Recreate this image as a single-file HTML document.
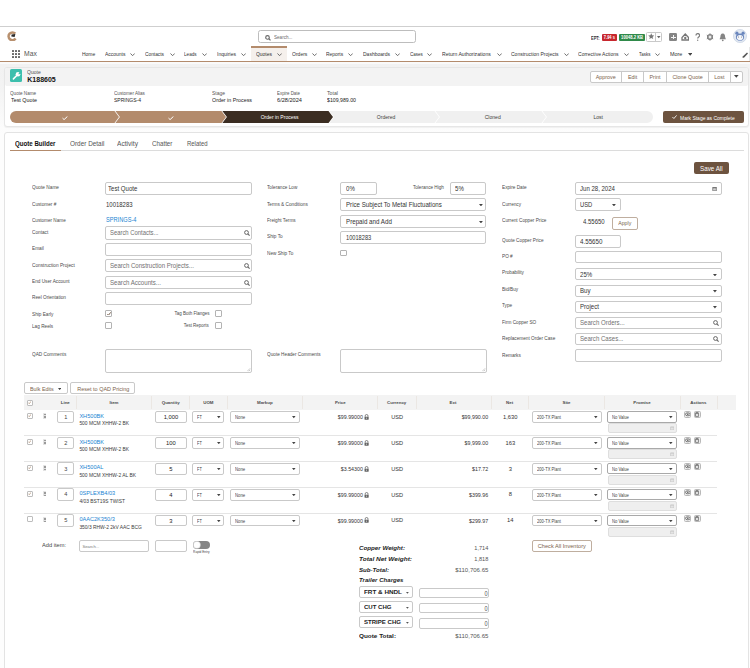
<!DOCTYPE html>
<html><head><meta charset="utf-8"><style>
html,body{margin:0;padding:0;}
body{width:750px;height:668px;position:relative;overflow:hidden;background:#fff;font-family:"Liberation Sans",sans-serif;}
div{box-sizing:border-box;}
</style></head><body>
<div style="position:absolute;left:0.00px;top:0.00px;width:750.00px;height:26.00px;background:#ffffff;border-radius:0px;box-sizing:border-box;"></div>
<div style="position:absolute;left:0.00px;top:26.00px;width:750.00px;height:1.00px;background:#cfcfcf;border-radius:0px;box-sizing:border-box;"></div>
<div style="position:absolute;left:0.00px;top:27.00px;width:750.00px;height:34.00px;background:#ffffff;border-radius:0px;box-sizing:border-box;"></div>
<svg style="position:absolute;left:6.00px;top:31.00px" width="11" height="10" viewBox="0 0 11 10"><path d="M9.3 2.6 A3.9 3.9 0 1 0 9.6 7.6" fill="none" stroke="#b8906e" stroke-width="2.5"/><path d="M5.6 3.4 L9.4 3.0 L8.6 5.9 L5.3 5.6 Z" fill="#2a2a2a"/></svg>
<div style="position:absolute;left:258.30px;top:29.90px;width:157.50px;height:13.30px;background:#fff;border:1px solid #bdbdbd;border-radius:2.5px;box-sizing:border-box;"></div>
<svg style="position:absolute;left:265.00px;top:34.60px" width="6" height="6" viewBox="0 0 6 6"><circle cx="2.5" cy="2.4" r="1.8" fill="none" stroke="#666" stroke-width="1.1"/><line x1="3.8" y1="3.7" x2="5.5" y2="5.4" stroke="#666" stroke-width="1.2"/></svg>
<div style="position:absolute;left:273.60px;top:34.86px;font-size:5.60px;line-height:1;font-weight:400;font-style:normal;color:#6b6b6b;white-space:pre;transform:scaleX(0.8210);transform-origin:left 50%;">Search...</div>
<div style="position:absolute;left:591.00px;top:35.54px;font-size:5.28px;line-height:1;font-weight:700;font-style:normal;color:#333;white-space:pre;transform:scaleX(0.7516);transform-origin:left 50%;">EPT:</div>
<div style="position:absolute;left:602.00px;top:34.00px;width:15.00px;height:7.00px;background:#c7272e;border-radius:1px;box-sizing:border-box;"></div>
<div style="position:absolute;left:602.15px;top:35.44px;font-size:5.29px;line-height:1;font-weight:700;font-style:normal;color:#fff;white-space:pre;transform:scaleX(0.7479);transform-origin:center 50%;">7.94 s</div>
<div style="position:absolute;left:619.00px;top:34.00px;width:26.00px;height:7.00px;background:#2f8a4a;border-radius:1px;box-sizing:border-box;"></div>
<div style="position:absolute;left:617.88px;top:35.44px;font-size:5.29px;line-height:1;font-weight:700;font-style:normal;color:#fff;white-space:pre;transform:scaleX(0.7792);transform-origin:center 50%;">10048.2 KB</div>
<div style="position:absolute;left:646.40px;top:32.00px;width:16.10px;height:9.80px;background:#fff;border:1px solid #c9c9c9;border-radius:1.5px;box-sizing:border-box;"></div>
<div style="position:absolute;left:655.20px;top:32.00px;width:0.70px;height:9.80px;background:#c9c9c9;border-radius:0px;box-sizing:border-box;"></div>
<svg style="position:absolute;left:647.80px;top:33.20px" width="6.5" height="6.5" viewBox="0 0 6.5 6.5"><path d="M3.25 0.3 L4.1 2.3 L6.3 2.5 L4.6 3.9 L5.2 6.1 L3.25 4.9 L1.3 6.1 L1.9 3.9 L0.2 2.5 L2.4 2.3Z" fill="#777"/></svg>
<svg style="position:absolute;left:657.30px;top:36.00px" width="3.5" height="2.5" viewBox="0 0 3.5 2.5"><path d="M0 0 L3.5 0 L1.75 2.2Z" fill="#666"/></svg>
<div style="position:absolute;left:669.00px;top:33.30px;width:8.00px;height:7.30px;background:#858585;border-radius:1.2px;box-sizing:border-box;"></div>
<div style="position:absolute;left:672.60px;top:34.70px;width:0.80px;height:4.50px;background:#f4f4f4;border-radius:0px;box-sizing:border-box;"></div>
<div style="position:absolute;left:670.50px;top:36.60px;width:5.00px;height:0.80px;background:#f4f4f4;border-radius:0px;box-sizing:border-box;"></div>
<svg style="position:absolute;left:680.80px;top:33.00px" width="8.5" height="8" viewBox="0 0 8.5 8"><path d="M1 7 L1 4.5 L4.25 1 L7.5 4.5 L7.5 7 Z" fill="none" stroke="#777" stroke-width="1.3"/><circle cx="4.25" cy="5" r="1.2" fill="#777"/></svg>
<svg style="position:absolute;left:694.80px;top:33.20px" width="5.4" height="8" viewBox="0 0 5.4 8"><path d="M1 2.4 A1.8 1.8 0 1 1 3.7 3.9 C2.9 4.5 2.7 4.9 2.7 5.6" fill="none" stroke="#808080" stroke-width="1.25"/><circle cx="2.7" cy="7.3" r="0.7" fill="#808080"/></svg>
<svg style="position:absolute;left:705.80px;top:33.20px" width="8" height="8" viewBox="0 0 8 8"><circle cx="4" cy="4" r="2.4" fill="none" stroke="#858585" stroke-width="1.3"/><g stroke="#858585" stroke-width="1.0"><line x1="4" y1="0.3" x2="4" y2="7.7"/><line x1="0.8" y1="2.1" x2="7.2" y2="5.9"/><line x1="0.8" y1="5.9" x2="7.2" y2="2.1"/></g><circle cx="4" cy="4" r="1.1" fill="#fff"/></svg>
<svg style="position:absolute;left:718.80px;top:33.00px" width="7.5" height="8.5" viewBox="0 0 7.5 8.5"><path d="M3.75 0.6 C1.8 0.6 1.4 2.5 1.4 4 L0.6 6.2 L6.9 6.2 L6.1 4 C6.1 2.5 5.7 0.6 3.75 0.6Z" fill="#858585"/><circle cx="3.75" cy="7.3" r="0.9" fill="#858585"/></svg>
<svg style="position:absolute;left:733.00px;top:29.30px" width="14" height="14" viewBox="0 0 14 14"><circle cx="7" cy="7" r="6.6" fill="#e3e9f2" stroke="#c3cfe0" stroke-width="0.6"/><circle cx="3.9" cy="4.2" r="1.6" fill="#6a86bd"/><circle cx="10.1" cy="4.2" r="1.6" fill="#6a86bd"/><ellipse cx="7" cy="8.1" rx="4.1" ry="3.6" fill="#6a86bd"/><ellipse cx="7" cy="8.6" rx="3.1" ry="2.6" fill="#f4f6fa"/><circle cx="5.6" cy="8" r="0.45" fill="#334"/><circle cx="8.4" cy="8" r="0.45" fill="#334"/></svg>
<div style="position:absolute;left:11.90px;top:49.80px;width:1.90px;height:1.90px;background:#6a6a6a;border-radius:0.2px;box-sizing:border-box;"></div>
<div style="position:absolute;left:11.90px;top:52.85px;width:1.90px;height:1.90px;background:#6a6a6a;border-radius:0.2px;box-sizing:border-box;"></div>
<div style="position:absolute;left:11.90px;top:55.90px;width:1.90px;height:1.90px;background:#6a6a6a;border-radius:0.2px;box-sizing:border-box;"></div>
<div style="position:absolute;left:14.95px;top:49.80px;width:1.90px;height:1.90px;background:#6a6a6a;border-radius:0.2px;box-sizing:border-box;"></div>
<div style="position:absolute;left:14.95px;top:52.85px;width:1.90px;height:1.90px;background:#6a6a6a;border-radius:0.2px;box-sizing:border-box;"></div>
<div style="position:absolute;left:14.95px;top:55.90px;width:1.90px;height:1.90px;background:#6a6a6a;border-radius:0.2px;box-sizing:border-box;"></div>
<div style="position:absolute;left:18.00px;top:49.80px;width:1.90px;height:1.90px;background:#6a6a6a;border-radius:0.2px;box-sizing:border-box;"></div>
<div style="position:absolute;left:18.00px;top:52.85px;width:1.90px;height:1.90px;background:#6a6a6a;border-radius:0.2px;box-sizing:border-box;"></div>
<div style="position:absolute;left:18.00px;top:55.90px;width:1.90px;height:1.90px;background:#6a6a6a;border-radius:0.2px;box-sizing:border-box;"></div>
<div style="position:absolute;left:24.00px;top:49.82px;font-size:8.00px;line-height:1;font-weight:400;font-style:normal;color:#555;white-space:pre;transform:scaleX(0.8469);transform-origin:left 50%;">Max</div>
<div style="position:absolute;left:251.00px;top:46.60px;width:36.00px;height:14.40px;background:#f5f0ec;border-radius:0px;box-sizing:border-box;"></div>
<div style="position:absolute;left:250.80px;top:46.40px;width:36.30px;height:1.60px;background:#b38b6c;border-radius:0px;box-sizing:border-box;"></div>
<div style="position:absolute;left:82.00px;top:51.83px;font-size:5.30px;line-height:1;font-weight:400;font-style:normal;color:#333;white-space:pre;transform:scaleX(0.9407);transform-origin:left 50%;">Home</div>
<div style="position:absolute;left:105.00px;top:51.83px;font-size:5.30px;line-height:1;font-weight:400;font-style:normal;color:#333;white-space:pre;transform:scaleX(0.9358);transform-origin:left 50%;">Accounts</div>
<svg style="position:absolute;left:130.30px;top:52.50px" width="5.2" height="3.4" viewBox="0 0 5.2 3.4"><path d="M0.5 0.5 L2.6 2.7 L4.7 0.5" fill="none" stroke="#666" stroke-width="0.95"/></svg>
<div style="position:absolute;left:145.00px;top:51.83px;font-size:5.30px;line-height:1;font-weight:400;font-style:normal;color:#333;white-space:pre;transform:scaleX(0.9084);transform-origin:left 50%;">Contacts</div>
<svg style="position:absolute;left:170.00px;top:52.50px" width="5.2" height="3.4" viewBox="0 0 5.2 3.4"><path d="M0.5 0.5 L2.6 2.7 L4.7 0.5" fill="none" stroke="#666" stroke-width="0.95"/></svg>
<div style="position:absolute;left:184.40px;top:51.83px;font-size:5.30px;line-height:1;font-weight:400;font-style:normal;color:#333;white-space:pre;transform:scaleX(0.8725);transform-origin:left 50%;">Leads</div>
<svg style="position:absolute;left:202.00px;top:52.50px" width="5.2" height="3.4" viewBox="0 0 5.2 3.4"><path d="M0.5 0.5 L2.6 2.7 L4.7 0.5" fill="none" stroke="#666" stroke-width="0.95"/></svg>
<div style="position:absolute;left:217.00px;top:51.83px;font-size:5.30px;line-height:1;font-weight:400;font-style:normal;color:#333;white-space:pre;transform:scaleX(0.9484);transform-origin:left 50%;">Inquiries</div>
<svg style="position:absolute;left:241.00px;top:52.50px" width="5.2" height="3.4" viewBox="0 0 5.2 3.4"><path d="M0.5 0.5 L2.6 2.7 L4.7 0.5" fill="none" stroke="#666" stroke-width="0.95"/></svg>
<div style="position:absolute;left:255.60px;top:51.83px;font-size:5.30px;line-height:1;font-weight:400;font-style:normal;color:#333;white-space:pre;transform:scaleX(0.9363);transform-origin:left 50%;">Quotes</div>
<svg style="position:absolute;left:277.00px;top:52.50px" width="5.2" height="3.4" viewBox="0 0 5.2 3.4"><path d="M0.5 0.5 L2.6 2.7 L4.7 0.5" fill="none" stroke="#666" stroke-width="0.95"/></svg>
<div style="position:absolute;left:291.60px;top:51.83px;font-size:5.30px;line-height:1;font-weight:400;font-style:normal;color:#333;white-space:pre;transform:scaleX(0.9507);transform-origin:left 50%;">Orders</div>
<svg style="position:absolute;left:312.00px;top:52.50px" width="5.2" height="3.4" viewBox="0 0 5.2 3.4"><path d="M0.5 0.5 L2.6 2.7 L4.7 0.5" fill="none" stroke="#666" stroke-width="0.95"/></svg>
<div style="position:absolute;left:326.40px;top:51.83px;font-size:5.30px;line-height:1;font-weight:400;font-style:normal;color:#333;white-space:pre;transform:scaleX(0.9268);transform-origin:left 50%;">Reports</div>
<svg style="position:absolute;left:348.00px;top:52.50px" width="5.2" height="3.4" viewBox="0 0 5.2 3.4"><path d="M0.5 0.5 L2.6 2.7 L4.7 0.5" fill="none" stroke="#666" stroke-width="0.95"/></svg>
<div style="position:absolute;left:363.00px;top:51.83px;font-size:5.30px;line-height:1;font-weight:400;font-style:normal;color:#333;white-space:pre;transform:scaleX(0.9448);transform-origin:left 50%;">Dashboards</div>
<svg style="position:absolute;left:395.00px;top:52.50px" width="5.2" height="3.4" viewBox="0 0 5.2 3.4"><path d="M0.5 0.5 L2.6 2.7 L4.7 0.5" fill="none" stroke="#666" stroke-width="0.95"/></svg>
<div style="position:absolute;left:409.60px;top:51.83px;font-size:5.30px;line-height:1;font-weight:400;font-style:normal;color:#333;white-space:pre;transform:scaleX(0.8520);transform-origin:left 50%;">Cases</div>
<svg style="position:absolute;left:427.00px;top:52.50px" width="5.2" height="3.4" viewBox="0 0 5.2 3.4"><path d="M0.5 0.5 L2.6 2.7 L4.7 0.5" fill="none" stroke="#666" stroke-width="0.95"/></svg>
<div style="position:absolute;left:442.00px;top:51.83px;font-size:5.30px;line-height:1;font-weight:400;font-style:normal;color:#333;white-space:pre;transform:scaleX(0.9630);transform-origin:left 50%;">Return Authorizations</div>
<svg style="position:absolute;left:496.50px;top:52.50px" width="5.2" height="3.4" viewBox="0 0 5.2 3.4"><path d="M0.5 0.5 L2.6 2.7 L4.7 0.5" fill="none" stroke="#666" stroke-width="0.95"/></svg>
<div style="position:absolute;left:510.80px;top:51.83px;font-size:5.30px;line-height:1;font-weight:400;font-style:normal;color:#333;white-space:pre;transform:scaleX(0.9450);transform-origin:left 50%;">Construction Projects</div>
<svg style="position:absolute;left:563.70px;top:52.50px" width="5.2" height="3.4" viewBox="0 0 5.2 3.4"><path d="M0.5 0.5 L2.6 2.7 L4.7 0.5" fill="none" stroke="#666" stroke-width="0.95"/></svg>
<div style="position:absolute;left:578.40px;top:51.83px;font-size:5.30px;line-height:1;font-weight:400;font-style:normal;color:#333;white-space:pre;transform:scaleX(0.9506);transform-origin:left 50%;">Corrective Actions</div>
<svg style="position:absolute;left:624.00px;top:52.50px" width="5.2" height="3.4" viewBox="0 0 5.2 3.4"><path d="M0.5 0.5 L2.6 2.7 L4.7 0.5" fill="none" stroke="#666" stroke-width="0.95"/></svg>
<div style="position:absolute;left:639.00px;top:51.83px;font-size:5.30px;line-height:1;font-weight:400;font-style:normal;color:#333;white-space:pre;transform:scaleX(0.8414);transform-origin:left 50%;">Tasks</div>
<svg style="position:absolute;left:655.00px;top:52.50px" width="5.2" height="3.4" viewBox="0 0 5.2 3.4"><path d="M0.5 0.5 L2.6 2.7 L4.7 0.5" fill="none" stroke="#666" stroke-width="0.95"/></svg>
<div style="position:absolute;left:669.60px;top:51.83px;font-size:5.30px;line-height:1;font-weight:400;font-style:normal;color:#333;white-space:pre;transform:scaleX(1.0269);transform-origin:left 50%;">More</div>
<svg style="position:absolute;left:687.60px;top:52.60px" width="4.4" height="3" viewBox="0 0 4.4 3"><path d="M0 0 L4.4 0 L2.2 2.8Z" fill="#444"/></svg>
<svg style="position:absolute;left:741.80px;top:51.50px" width="6.5" height="6.5" viewBox="0 0 6.5 6.5"><path d="M0.5 6 L1 4.2 L5 0.4 L6.1 1.5 L2.2 5.4 Z" fill="#555"/></svg>
<div style="position:absolute;left:748.50px;top:47.00px;width:1.50px;height:14.00px;background:#e8e8e8;border-radius:0px;box-sizing:border-box;"></div>
<div style="position:absolute;left:0.00px;top:61.00px;width:750.00px;height:1.20px;background:#b38b6c;border-radius:0px;box-sizing:border-box;"></div>
<div style="position:absolute;left:0.00px;top:62.20px;width:750.00px;height:605.80px;background:#fdfdfd;border-radius:0px;box-sizing:border-box;"></div>
<div style="position:absolute;left:0.00px;top:63.60px;width:750.00px;height:71.40px;background:linear-gradient(#f2f2f2 0%, #f3f3f3 30%, #fcfcfc 90%, #fdfdfd 100%);border-radius:0px;box-sizing:border-box;"></div>
<div style="position:absolute;left:0.00px;top:62.20px;width:750.00px;height:1.40px;background:#fafafa;border-radius:0px;box-sizing:border-box;"></div>
<div style="position:absolute;left:4.20px;top:66.80px;width:744.60px;height:60.40px;background:#ffffff;border:1px solid #e6e6e6;border-radius:3px;box-sizing:border-box;box-shadow:0 1px 1px rgba(0,0,0,0.05);"></div>
<div style="position:absolute;left:5.20px;top:67.80px;width:742.60px;height:18.00px;background:#f3f3f3;border-radius:2px;box-sizing:border-box;"></div>
<div style="position:absolute;left:10.00px;top:69.00px;width:12.30px;height:12.70px;background:#3dbfad;border-radius:1.5px;box-sizing:border-box;"></div>
<svg style="position:absolute;left:11.50px;top:70.50px" width="9.5" height="9.5" viewBox="0 0 9.5 9.5"><circle cx="6.0" cy="3.2" r="2.3" fill="#fff"/><line x1="5.0" y1="4.3" x2="1.4" y2="7.9" stroke="#fff" stroke-width="1.5" stroke-linecap="round"/><path d="M6.3 2.9 L8.0 0.6 L9.3 1.9 L7.0 3.6 Z" fill="#3dbfad"/></svg>
<div style="position:absolute;left:27.30px;top:70.10px;font-size:5.90px;line-height:1;font-weight:400;font-style:normal;color:#555;white-space:pre;transform:scaleX(0.8586);transform-origin:left 50%;">Quote</div>
<div style="position:absolute;left:27.30px;top:75.68px;font-size:7.00px;line-height:1;font-weight:700;font-style:normal;color:#111;white-space:pre;">K188605</div>
<div style="position:absolute;left:589.70px;top:70.50px;width:152.90px;height:12.20px;background:#ffffff;border:1px solid #c9c9c9;border-radius:2px;box-sizing:border-box;"></div>
<div style="position:absolute;left:595.64px;top:74.58px;font-size:5.40px;line-height:1;font-weight:400;font-style:normal;color:#7a5f4c;white-space:pre;">Approve</div>
<div style="position:absolute;left:621.40px;top:70.50px;width:0.80px;height:12.20px;background:#c9c9c9;border-radius:0px;box-sizing:border-box;"></div>
<div style="position:absolute;left:627.90px;top:74.58px;font-size:5.40px;line-height:1;font-weight:400;font-style:normal;color:#7a5f4c;white-space:pre;">Edit</div>
<div style="position:absolute;left:643.10px;top:70.50px;width:0.80px;height:12.20px;background:#c9c9c9;border-radius:0px;box-sizing:border-box;"></div>
<div style="position:absolute;left:649.50px;top:74.58px;font-size:5.40px;line-height:1;font-weight:400;font-style:normal;color:#7a5f4c;white-space:pre;">Print</div>
<div style="position:absolute;left:666.40px;top:70.50px;width:0.80px;height:12.20px;background:#c9c9c9;border-radius:0px;box-sizing:border-box;"></div>
<div style="position:absolute;left:672.44px;top:74.58px;font-size:5.40px;line-height:1;font-weight:400;font-style:normal;color:#7a5f4c;white-space:pre;">Clone Quote</div>
<div style="position:absolute;left:708.20px;top:70.50px;width:0.80px;height:12.20px;background:#c9c9c9;border-radius:0px;box-sizing:border-box;"></div>
<div style="position:absolute;left:714.25px;top:74.58px;font-size:5.40px;line-height:1;font-weight:400;font-style:normal;color:#7a5f4c;white-space:pre;">Lost</div>
<div style="position:absolute;left:729.90px;top:70.50px;width:0.80px;height:12.20px;background:#c9c9c9;border-radius:0px;box-sizing:border-box;"></div>
<svg style="position:absolute;left:734.20px;top:75.40px" width="4.6" height="3" viewBox="0 0 4.6 3"><path d="M0 0 L4.6 0 L2.3 2.8Z" fill="#444"/></svg>
<div style="position:absolute;left:10.00px;top:90.69px;font-size:5.20px;line-height:1;font-weight:400;font-style:normal;color:#555;white-space:pre;transform:scaleX(0.8887);transform-origin:left 50%;">Quote Name</div>
<div style="position:absolute;left:10.70px;top:96.64px;font-size:6.00px;line-height:1;font-weight:400;font-style:normal;color:#222;white-space:pre;transform:scaleX(0.8961);transform-origin:left 50%;">Test Quote</div>
<div style="position:absolute;left:114.00px;top:90.69px;font-size:5.20px;line-height:1;font-weight:400;font-style:normal;color:#555;white-space:pre;transform:scaleX(0.8865);transform-origin:left 50%;">Customer Alias</div>
<div style="position:absolute;left:114.00px;top:96.64px;font-size:6.00px;line-height:1;font-weight:400;font-style:normal;color:#222;white-space:pre;transform:scaleX(0.8349);transform-origin:left 50%;">SPRINGS-4</div>
<div style="position:absolute;left:211.80px;top:90.69px;font-size:5.20px;line-height:1;font-weight:400;font-style:normal;color:#555;white-space:pre;transform:scaleX(0.9567);transform-origin:left 50%;">Stage</div>
<div style="position:absolute;left:211.80px;top:96.64px;font-size:6.00px;line-height:1;font-weight:400;font-style:normal;color:#222;white-space:pre;transform:scaleX(0.8886);transform-origin:left 50%;">Order in Process</div>
<div style="position:absolute;left:277.00px;top:90.69px;font-size:5.20px;line-height:1;font-weight:400;font-style:normal;color:#555;white-space:pre;transform:scaleX(0.8466);transform-origin:left 50%;">Expire Date</div>
<div style="position:absolute;left:277.00px;top:96.64px;font-size:6.00px;line-height:1;font-weight:400;font-style:normal;color:#222;white-space:pre;transform:scaleX(0.9366);transform-origin:left 50%;">6/28/2024</div>
<div style="position:absolute;left:327.00px;top:90.69px;font-size:5.20px;line-height:1;font-weight:400;font-style:normal;color:#555;white-space:pre;">Total</div>
<div style="position:absolute;left:327.00px;top:96.64px;font-size:6.00px;line-height:1;font-weight:400;font-style:normal;color:#222;white-space:pre;transform:scaleX(0.8691);transform-origin:left 50%;">$109,989.00</div>
<svg style="position:absolute;left:10.00px;top:111.00px" width="643" height="12" viewBox="0 0 643 12"><path d="M6 0 L104.5 0 L109 6.0 L104.5 12 L6 12 A6 6 0 0 1 6 0 Z" fill="#b38b6c"/><path d="M105.4 0 L211.5 0 L216 6.0 L211.5 12 L105.4 12 L109.9 6.0 Z" fill="#b38b6c"/><path d="M212.4 0 L318.5 0 L323 6.0 L318.5 12 L212.4 12 L216.9 6.0 Z" fill="#3b2d22"/><path d="M319.4 0 L424.5 0 L429 6.0 L424.5 12 L319.4 12 L323.9 6.0 Z" fill="#f0f0f0"/><path d="M425.4 0 L531.5 0 L536 6.0 L531.5 12 L425.4 12 L429.9 6.0 Z" fill="#f0f0f0"/><path d="M532.4 0 L637 0 A6 6 0 0 1 637 12 L532.4 12 L536.9 6.0 Z" fill="#f0f0f0"/></svg>
<svg style="position:absolute;left:61.60px;top:115.80px" width="6" height="4.2" viewBox="0 0 6 4.2"><path d="M0.5 2.1 L2.1 3.6 L5.4 0.5" fill="none" stroke="#fff" stroke-width="1.0"/></svg>
<svg style="position:absolute;left:168.30px;top:115.80px" width="6" height="4.2" viewBox="0 0 6 4.2"><path d="M0.5 2.1 L2.1 3.6 L5.4 0.5" fill="none" stroke="#fff" stroke-width="1.0"/></svg>
<div style="position:absolute;left:258.87px;top:115.12px;font-size:5.50px;line-height:1;font-weight:400;font-style:normal;color:#fff;white-space:pre;transform:scaleX(0.9209);transform-origin:center 50%;">Order in Process</div>
<div style="position:absolute;left:375.91px;top:115.12px;font-size:5.50px;line-height:1;font-weight:400;font-style:normal;color:#3e3e3c;white-space:pre;transform:scaleX(0.9169);transform-origin:center 50%;">Ordered</div>
<div style="position:absolute;left:483.79px;top:115.12px;font-size:5.50px;line-height:1;font-weight:400;font-style:normal;color:#3e3e3c;white-space:pre;transform:scaleX(0.9180);transform-origin:center 50%;">Cloned</div>
<div style="position:absolute;left:593.40px;top:115.12px;font-size:5.50px;line-height:1;font-weight:400;font-style:normal;color:#3e3e3c;white-space:pre;transform:scaleX(0.9138);transform-origin:center 50%;">Lost</div>
<div style="position:absolute;left:663.00px;top:111.00px;width:81.00px;height:12.20px;background:#6d533f;border-radius:2px;box-sizing:border-box;"></div>
<svg style="position:absolute;left:671.60px;top:114.90px" width="5" height="4" viewBox="0 0 5 4"><path d="M0.4 2.0 L1.9 3.5 L4.6 0.4" fill="none" stroke="#fff" stroke-width="0.85"/></svg>
<div style="position:absolute;left:680.20px;top:114.89px;font-size:6.09px;line-height:1;font-weight:400;font-style:normal;color:#fff;white-space:pre;transform:scaleX(0.8177);transform-origin:left 50%;">Mark Stage as Complete</div>
<div style="position:absolute;left:4.20px;top:131.60px;width:744.60px;height:548.40px;background:#ffffff;border:1px solid #e3e3e3;border-radius:3px;box-sizing:border-box;"></div>
<div style="position:absolute;left:14.80px;top:140.59px;font-size:6.80px;line-height:1;font-weight:700;font-style:normal;color:#111;white-space:pre;transform:scaleX(0.9008);transform-origin:left 50%;">Quote Builder</div>
<div style="position:absolute;left:69.50px;top:140.59px;font-size:6.80px;line-height:1;font-weight:400;font-style:normal;color:#555;white-space:pre;transform:scaleX(0.9412);transform-origin:left 50%;">Order Detail</div>
<div style="position:absolute;left:117.00px;top:140.59px;font-size:6.80px;line-height:1;font-weight:400;font-style:normal;color:#555;white-space:pre;transform:scaleX(0.9751);transform-origin:left 50%;">Activity</div>
<div style="position:absolute;left:152.00px;top:140.59px;font-size:6.80px;line-height:1;font-weight:400;font-style:normal;color:#555;white-space:pre;transform:scaleX(0.9148);transform-origin:left 50%;">Chatter</div>
<div style="position:absolute;left:186.80px;top:140.59px;font-size:6.80px;line-height:1;font-weight:400;font-style:normal;color:#555;white-space:pre;transform:scaleX(0.8746);transform-origin:left 50%;">Related</div>
<div style="position:absolute;left:9.70px;top:150.20px;width:734.30px;height:1.00px;background:#dcdcdc;border-radius:0px;box-sizing:border-box;"></div>
<div style="position:absolute;left:9.70px;top:149.90px;width:51.00px;height:1.30px;background:#b38b6c;border-radius:0px;box-sizing:border-box;"></div>
<div style="position:absolute;left:694.00px;top:162.00px;width:35.00px;height:12.40px;background:#6d533f;border-radius:2px;box-sizing:border-box;"></div>
<div style="position:absolute;left:698.00px;top:165.08px;font-size:7.36px;line-height:1;font-weight:400;font-style:normal;color:#fff;white-space:pre;transform:scaleX(0.8498);transform-origin:center 50%;">Save All</div>
<div style="position:absolute;left:32.30px;top:186.24px;font-size:4.94px;line-height:1;font-weight:400;font-style:normal;color:#4a4a4a;white-space:pre;transform:scaleX(0.9650);transform-origin:left 50%;">Quote Name</div>
<div style="position:absolute;left:105.00px;top:182.00px;width:147.00px;height:13.00px;background:#fff;border:1px solid #c9c9c9;border-radius:2px;box-sizing:border-box;"></div>
<div style="position:absolute;left:108.20px;top:184.97px;font-size:7.01px;line-height:1;font-weight:400;font-style:normal;color:#333;white-space:pre;transform:scaleX(0.8666);transform-origin:left 50%;">Test Quote</div>
<div style="position:absolute;left:32.30px;top:202.64px;font-size:4.94px;line-height:1;font-weight:400;font-style:normal;color:#4a4a4a;white-space:pre;transform:scaleX(0.9524);transform-origin:left 50%;">Customer #</div>
<div style="position:absolute;left:106.20px;top:200.77px;font-size:7.01px;line-height:1;font-weight:400;font-style:normal;color:#333;white-space:pre;transform:scaleX(0.8523);transform-origin:left 50%;">10018283</div>
<div style="position:absolute;left:32.30px;top:219.04px;font-size:4.94px;line-height:1;font-weight:400;font-style:normal;color:#4a4a4a;white-space:pre;transform:scaleX(0.9380);transform-origin:left 50%;">Customer Name</div>
<div style="position:absolute;left:106.20px;top:215.97px;font-size:7.01px;line-height:1;font-weight:400;font-style:normal;color:#1b84d2;white-space:pre;transform:scaleX(0.8066);transform-origin:left 50%;">SPRINGS-4</div>
<div style="position:absolute;left:32.30px;top:230.64px;font-size:4.94px;line-height:1;font-weight:400;font-style:normal;color:#4a4a4a;white-space:pre;transform:scaleX(0.9524);transform-origin:left 50%;">Contact</div>
<div style="position:absolute;left:105.00px;top:226.30px;width:147.00px;height:13.30px;background:#fff;border:1px solid #c9c9c9;border-radius:2px;box-sizing:border-box;"></div>
<div style="position:absolute;left:110.00px;top:229.37px;font-size:7.01px;line-height:1;font-weight:400;font-style:normal;color:#707070;white-space:pre;transform:scaleX(0.8405);transform-origin:left 50%;">Search Contacts...</div>
<svg style="position:absolute;left:243.80px;top:230.10px" width="6" height="6" viewBox="0 0 6 6"><circle cx="2.5" cy="2.5" r="1.9" fill="none" stroke="#666" stroke-width="1.0"/><line x1="3.8" y1="3.8" x2="5.6" y2="5.6" stroke="#666" stroke-width="1.1"/></svg>
<div style="position:absolute;left:32.30px;top:247.34px;font-size:4.94px;line-height:1;font-weight:400;font-style:normal;color:#4a4a4a;white-space:pre;transform:scaleX(0.9524);transform-origin:left 50%;">Email</div>
<div style="position:absolute;left:105.00px;top:242.90px;width:147.00px;height:13.10px;background:#fff;border:1px solid #c9c9c9;border-radius:2px;box-sizing:border-box;"></div>
<div style="position:absolute;left:32.30px;top:263.64px;font-size:4.94px;line-height:1;font-weight:400;font-style:normal;color:#4a4a4a;white-space:pre;transform:scaleX(0.9610);transform-origin:left 50%;">Construction Project</div>
<div style="position:absolute;left:105.00px;top:258.90px;width:147.00px;height:12.90px;background:#fff;border:1px solid #c9c9c9;border-radius:2px;box-sizing:border-box;"></div>
<div style="position:absolute;left:110.00px;top:261.77px;font-size:7.01px;line-height:1;font-weight:400;font-style:normal;color:#707070;white-space:pre;transform:scaleX(0.8687);transform-origin:left 50%;">Search Construction Projects...</div>
<svg style="position:absolute;left:243.80px;top:262.70px" width="6" height="6" viewBox="0 0 6 6"><circle cx="2.5" cy="2.5" r="1.9" fill="none" stroke="#666" stroke-width="1.0"/><line x1="3.8" y1="3.8" x2="5.6" y2="5.6" stroke="#666" stroke-width="1.1"/></svg>
<div style="position:absolute;left:32.30px;top:279.94px;font-size:4.94px;line-height:1;font-weight:400;font-style:normal;color:#4a4a4a;white-space:pre;transform:scaleX(0.9524);transform-origin:left 50%;">End User Account</div>
<div style="position:absolute;left:105.00px;top:275.90px;width:147.00px;height:13.10px;background:#fff;border:1px solid #c9c9c9;border-radius:2px;box-sizing:border-box;"></div>
<div style="position:absolute;left:110.00px;top:278.87px;font-size:7.01px;line-height:1;font-weight:400;font-style:normal;color:#707070;white-space:pre;transform:scaleX(0.8719);transform-origin:left 50%;">Search Accounts...</div>
<svg style="position:absolute;left:243.80px;top:279.60px" width="6" height="6" viewBox="0 0 6 6"><circle cx="2.5" cy="2.5" r="1.9" fill="none" stroke="#666" stroke-width="1.0"/><line x1="3.8" y1="3.8" x2="5.6" y2="5.6" stroke="#666" stroke-width="1.1"/></svg>
<div style="position:absolute;left:32.30px;top:295.94px;font-size:4.94px;line-height:1;font-weight:400;font-style:normal;color:#4a4a4a;white-space:pre;transform:scaleX(0.9524);transform-origin:left 50%;">Reel Orientation</div>
<div style="position:absolute;left:105.00px;top:291.90px;width:147.00px;height:13.10px;background:#fff;border:1px solid #c9c9c9;border-radius:2px;box-sizing:border-box;"></div>
<div style="position:absolute;left:32.30px;top:312.64px;font-size:4.94px;line-height:1;font-weight:400;font-style:normal;color:#4a4a4a;white-space:pre;transform:scaleX(0.9524);transform-origin:left 50%;">Ship Early</div>
<div style="position:absolute;left:105.40px;top:310.30px;width:6.60px;height:6.60px;background:#fff;border:1px solid #b3b3b3;border-radius:1px;box-sizing:border-box;"></div>
<svg style="position:absolute;left:106.70px;top:311.80px" width="3.9999999999999996" height="3.5999999999999996" viewBox="0 0 3.9999999999999996 3.5999999999999996"><path d="M0.3 1.98 L1.52 3.24 L3.70 0.3" fill="none" stroke="#6d533f" stroke-width="0.9"/></svg>
<div style="position:absolute;left:170.59px;top:312.24px;font-size:4.94px;line-height:1;font-weight:400;font-style:normal;color:#4a4a4a;white-space:pre;transform:scaleX(0.9113);transform-origin:right 50%;">Tag Both Flanges</div>
<div style="position:absolute;left:215.30px;top:310.40px;width:6.60px;height:6.60px;background:#fff;border:1px solid #b3b3b3;border-radius:1px;box-sizing:border-box;"></div>
<div style="position:absolute;left:32.30px;top:324.64px;font-size:4.94px;line-height:1;font-weight:400;font-style:normal;color:#4a4a4a;white-space:pre;transform:scaleX(0.9524);transform-origin:left 50%;">Lag Reels</div>
<div style="position:absolute;left:105.40px;top:322.40px;width:6.60px;height:6.60px;background:#fff;border:1px solid #b3b3b3;border-radius:1px;box-sizing:border-box;"></div>
<div style="position:absolute;left:181.30px;top:324.24px;font-size:4.94px;line-height:1;font-weight:400;font-style:normal;color:#4a4a4a;white-space:pre;transform:scaleX(0.9025);transform-origin:right 50%;">Test Reports</div>
<div style="position:absolute;left:215.30px;top:322.40px;width:6.60px;height:6.60px;background:#fff;border:1px solid #b3b3b3;border-radius:1px;box-sizing:border-box;"></div>
<div style="position:absolute;left:32.30px;top:353.34px;font-size:4.94px;line-height:1;font-weight:400;font-style:normal;color:#4a4a4a;white-space:pre;transform:scaleX(0.9524);transform-origin:left 50%;">QAD Comments</div>
<div style="position:absolute;left:105.00px;top:348.90px;width:146.80px;height:23.90px;background:#fff;border:1px solid #c9c9c9;border-radius:2px;box-sizing:border-box;"></div>
<svg style="position:absolute;left:247.30px;top:368.20px" width="3.5" height="3.5" viewBox="0 0 3.5 3.5"><path d="M3.2 0.3 L0.3 3.2 M3.2 1.8 L1.8 3.2" stroke="#999" stroke-width="0.5"/></svg>
<div style="position:absolute;left:267.20px;top:186.24px;font-size:4.94px;line-height:1;font-weight:400;font-style:normal;color:#4a4a4a;white-space:pre;transform:scaleX(0.9524);transform-origin:left 50%;">Tolerance Low</div>
<div style="position:absolute;left:340.10px;top:182.10px;width:36.70px;height:12.70px;background:#fff;border:1px solid #c9c9c9;border-radius:2px;box-sizing:border-box;"></div>
<div style="position:absolute;left:345.50px;top:184.97px;font-size:7.01px;line-height:1;font-weight:400;font-style:normal;color:#333;white-space:pre;transform:scaleX(0.8696);transform-origin:left 50%;">0%</div>
<div style="position:absolute;left:411.08px;top:185.84px;font-size:4.94px;line-height:1;font-weight:400;font-style:normal;color:#4a4a4a;white-space:pre;transform:scaleX(0.9417);transform-origin:right 50%;">Tolerance High</div>
<div style="position:absolute;left:449.60px;top:182.10px;width:36.80px;height:12.70px;background:#fff;border:1px solid #c9c9c9;border-radius:2px;box-sizing:border-box;"></div>
<div style="position:absolute;left:454.80px;top:184.97px;font-size:7.01px;line-height:1;font-weight:400;font-style:normal;color:#333;white-space:pre;transform:scaleX(0.8696);transform-origin:left 50%;">5%</div>
<div style="position:absolute;left:267.20px;top:202.64px;font-size:4.94px;line-height:1;font-weight:400;font-style:normal;color:#4a4a4a;white-space:pre;transform:scaleX(0.9524);transform-origin:left 50%;">Terms &amp; Conditions</div>
<div style="position:absolute;left:340.10px;top:198.10px;width:146.30px;height:13.00px;background:#fff;border:1px solid #c9c9c9;border-radius:2px;box-sizing:border-box;"></div>
<div style="position:absolute;left:345.70px;top:201.17px;font-size:7.01px;line-height:1;font-weight:400;font-style:normal;color:#333;white-space:pre;transform:scaleX(0.8772);transform-origin:left 50%;">Price Subject To Metal Fluctuations</div>
<svg style="position:absolute;left:478.85px;top:204.09px" width="3.9" height="2.418" viewBox="0 0 3.9 2.418"><path d="M0 0 L3.9 0 L1.95 2.418Z" fill="#444"/></svg>
<div style="position:absolute;left:267.20px;top:219.04px;font-size:4.94px;line-height:1;font-weight:400;font-style:normal;color:#4a4a4a;white-space:pre;transform:scaleX(0.9524);transform-origin:left 50%;">Freight Terms</div>
<div style="position:absolute;left:340.10px;top:214.90px;width:146.30px;height:12.90px;background:#fff;border:1px solid #c9c9c9;border-radius:2px;box-sizing:border-box;"></div>
<div style="position:absolute;left:345.70px;top:217.87px;font-size:7.01px;line-height:1;font-weight:400;font-style:normal;color:#333;white-space:pre;transform:scaleX(0.8867);transform-origin:left 50%;">Prepaid and Add</div>
<svg style="position:absolute;left:478.85px;top:220.79px" width="3.9" height="2.418" viewBox="0 0 3.9 2.418"><path d="M0 0 L3.9 0 L1.95 2.418Z" fill="#444"/></svg>
<div style="position:absolute;left:267.20px;top:235.14px;font-size:4.94px;line-height:1;font-weight:400;font-style:normal;color:#4a4a4a;white-space:pre;transform:scaleX(0.9524);transform-origin:left 50%;">Ship To</div>
<div style="position:absolute;left:340.10px;top:231.00px;width:146.30px;height:12.80px;background:#fff;border:1px solid #c9c9c9;border-radius:2px;box-sizing:border-box;"></div>
<div style="position:absolute;left:345.70px;top:233.97px;font-size:7.01px;line-height:1;font-weight:400;font-style:normal;color:#333;white-space:pre;transform:scaleX(0.8106);transform-origin:left 50%;">10018283</div>
<div style="position:absolute;left:267.20px;top:251.64px;font-size:4.94px;line-height:1;font-weight:400;font-style:normal;color:#4a4a4a;white-space:pre;transform:scaleX(0.9524);transform-origin:left 50%;">New Ship To</div>
<div style="position:absolute;left:340.30px;top:249.50px;width:6.60px;height:6.60px;background:#fff;border:1px solid #b3b3b3;border-radius:1px;box-sizing:border-box;"></div>
<div style="position:absolute;left:267.20px;top:353.34px;font-size:4.94px;line-height:1;font-weight:400;font-style:normal;color:#4a4a4a;white-space:pre;transform:scaleX(0.9524);transform-origin:left 50%;">Quote Header Comments</div>
<div style="position:absolute;left:340.00px;top:349.10px;width:146.60px;height:23.70px;background:#fff;border:1px solid #c9c9c9;border-radius:2px;box-sizing:border-box;"></div>
<svg style="position:absolute;left:482.10px;top:368.20px" width="3.5" height="3.5" viewBox="0 0 3.5 3.5"><path d="M3.2 0.3 L0.3 3.2 M3.2 1.8 L1.8 3.2" stroke="#999" stroke-width="0.5"/></svg>
<div style="position:absolute;left:501.70px;top:186.04px;font-size:4.94px;line-height:1;font-weight:400;font-style:normal;color:#4a4a4a;white-space:pre;transform:scaleX(0.9524);transform-origin:left 50%;">Expire Date</div>
<div style="position:absolute;left:574.60px;top:182.10px;width:147.30px;height:12.70px;background:#fff;border:1px solid #c9c9c9;border-radius:2px;box-sizing:border-box;"></div>
<div style="position:absolute;left:580.00px;top:184.97px;font-size:7.01px;line-height:1;font-weight:400;font-style:normal;color:#333;white-space:pre;transform:scaleX(0.8628);transform-origin:left 50%;">Jun 28, 2024</div>
<svg style="position:absolute;left:711.60px;top:186.20px" width="5.2" height="5.2" viewBox="0 0 5.2 5.2"><rect x="0.3" y="0.9" width="4.6" height="4.1" rx="0.5" fill="#777"/><rect x="0.9" y="2.2" width="3.4" height="2.2" fill="#ddd"/><rect x="1.2" y="2.5" width="1" height="0.8" fill="#777"/><rect x="2.8" y="2.5" width="1" height="0.8" fill="#777"/></svg>
<div style="position:absolute;left:501.70px;top:202.64px;font-size:4.94px;line-height:1;font-weight:400;font-style:normal;color:#4a4a4a;white-space:pre;transform:scaleX(0.9524);transform-origin:left 50%;">Currency</div>
<div style="position:absolute;left:574.60px;top:198.10px;width:46.10px;height:12.90px;background:#fff;border:1px solid #c9c9c9;border-radius:2px;box-sizing:border-box;"></div>
<div style="position:absolute;left:580.00px;top:201.17px;font-size:7.01px;line-height:1;font-weight:400;font-style:normal;color:#333;white-space:pre;transform:scaleX(0.8304);transform-origin:left 50%;">USD</div>
<svg style="position:absolute;left:612.25px;top:204.09px" width="3.9" height="2.418" viewBox="0 0 3.9 2.418"><path d="M0 0 L3.9 0 L1.95 2.418Z" fill="#444"/></svg>
<div style="position:absolute;left:501.70px;top:218.94px;font-size:4.94px;line-height:1;font-weight:400;font-style:normal;color:#4a4a4a;white-space:pre;transform:scaleX(0.9524);transform-origin:left 50%;">Current Copper Price</div>
<div style="position:absolute;left:583.30px;top:218.17px;font-size:7.01px;line-height:1;font-weight:400;font-style:normal;color:#333;white-space:pre;transform:scaleX(0.8557);transform-origin:left 50%;">4.55650</div>
<div style="position:absolute;left:611.70px;top:217.00px;width:26.30px;height:12.70px;background:#fff;border:1px solid #bfae9f;border-radius:2px;box-sizing:border-box;"></div>
<div style="position:absolute;left:618.05px;top:221.18px;font-size:5.40px;line-height:1;font-weight:400;font-style:normal;color:#7a5f4c;white-space:pre;transform:scaleX(0.9624);transform-origin:center 50%;">Apply</div>
<div style="position:absolute;left:501.70px;top:239.14px;font-size:4.94px;line-height:1;font-weight:400;font-style:normal;color:#4a4a4a;white-space:pre;transform:scaleX(0.9524);transform-origin:left 50%;">Quote Copper Price</div>
<div style="position:absolute;left:574.60px;top:235.00px;width:46.10px;height:13.00px;background:#fff;border:1px solid #c9c9c9;border-radius:2px;box-sizing:border-box;"></div>
<div style="position:absolute;left:580.00px;top:237.97px;font-size:7.01px;line-height:1;font-weight:400;font-style:normal;color:#333;white-space:pre;transform:scaleX(0.8873);transform-origin:left 50%;">4.55650</div>
<div style="position:absolute;left:501.70px;top:255.04px;font-size:4.94px;line-height:1;font-weight:400;font-style:normal;color:#4a4a4a;white-space:pre;transform:scaleX(0.9524);transform-origin:left 50%;">PO #</div>
<div style="position:absolute;left:574.60px;top:250.80px;width:147.30px;height:12.60px;background:#fff;border:1px solid #c9c9c9;border-radius:2px;box-sizing:border-box;"></div>
<div style="position:absolute;left:501.70px;top:271.34px;font-size:4.94px;line-height:1;font-weight:400;font-style:normal;color:#4a4a4a;white-space:pre;transform:scaleX(0.9524);transform-origin:left 50%;">Probability</div>
<div style="position:absolute;left:574.60px;top:267.80px;width:147.30px;height:12.60px;background:#fff;border:1px solid #c9c9c9;border-radius:2px;box-sizing:border-box;"></div>
<div style="position:absolute;left:580.00px;top:270.67px;font-size:7.01px;line-height:1;font-weight:400;font-style:normal;color:#333;white-space:pre;transform:scaleX(0.8696);transform-origin:left 50%;">25%</div>
<svg style="position:absolute;left:713.05px;top:273.69px" width="3.9" height="2.418" viewBox="0 0 3.9 2.418"><path d="M0 0 L3.9 0 L1.95 2.418Z" fill="#444"/></svg>
<div style="position:absolute;left:501.70px;top:287.64px;font-size:4.94px;line-height:1;font-weight:400;font-style:normal;color:#4a4a4a;white-space:pre;transform:scaleX(0.9524);transform-origin:left 50%;">Bid/Buy</div>
<div style="position:absolute;left:574.60px;top:284.50px;width:147.30px;height:12.60px;background:#fff;border:1px solid #c9c9c9;border-radius:2px;box-sizing:border-box;"></div>
<div style="position:absolute;left:580.00px;top:287.17px;font-size:7.01px;line-height:1;font-weight:400;font-style:normal;color:#333;white-space:pre;transform:scaleX(0.8696);transform-origin:left 50%;">Buy</div>
<svg style="position:absolute;left:713.05px;top:290.29px" width="3.9" height="2.418" viewBox="0 0 3.9 2.418"><path d="M0 0 L3.9 0 L1.95 2.418Z" fill="#444"/></svg>
<div style="position:absolute;left:501.70px;top:304.34px;font-size:4.94px;line-height:1;font-weight:400;font-style:normal;color:#4a4a4a;white-space:pre;transform:scaleX(0.9524);transform-origin:left 50%;">Type</div>
<div style="position:absolute;left:574.60px;top:300.60px;width:147.30px;height:12.70px;background:#fff;border:1px solid #c9c9c9;border-radius:2px;box-sizing:border-box;"></div>
<div style="position:absolute;left:580.00px;top:303.37px;font-size:7.01px;line-height:1;font-weight:400;font-style:normal;color:#333;white-space:pre;transform:scaleX(0.8696);transform-origin:left 50%;">Project</div>
<svg style="position:absolute;left:713.05px;top:306.39px" width="3.9" height="2.418" viewBox="0 0 3.9 2.418"><path d="M0 0 L3.9 0 L1.95 2.418Z" fill="#444"/></svg>
<div style="position:absolute;left:501.70px;top:320.64px;font-size:4.94px;line-height:1;font-weight:400;font-style:normal;color:#4a4a4a;white-space:pre;transform:scaleX(0.9524);transform-origin:left 50%;">Firm Copper SO</div>
<div style="position:absolute;left:574.60px;top:316.60px;width:147.30px;height:12.70px;background:#fff;border:1px solid #c9c9c9;border-radius:2px;box-sizing:border-box;"></div>
<div style="position:absolute;left:580.00px;top:319.47px;font-size:7.01px;line-height:1;font-weight:400;font-style:normal;color:#707070;white-space:pre;transform:scaleX(0.8696);transform-origin:left 50%;">Search Orders...</div>
<svg style="position:absolute;left:713.20px;top:320.40px" width="6" height="6" viewBox="0 0 6 6"><circle cx="2.5" cy="2.5" r="1.9" fill="none" stroke="#666" stroke-width="1.0"/><line x1="3.8" y1="3.8" x2="5.6" y2="5.6" stroke="#666" stroke-width="1.1"/></svg>
<div style="position:absolute;left:501.70px;top:336.64px;font-size:4.94px;line-height:1;font-weight:400;font-style:normal;color:#4a4a4a;white-space:pre;transform:scaleX(0.9524);transform-origin:left 50%;">Replacement Order Case</div>
<div style="position:absolute;left:574.60px;top:332.60px;width:147.30px;height:12.70px;background:#fff;border:1px solid #c9c9c9;border-radius:2px;box-sizing:border-box;"></div>
<div style="position:absolute;left:580.00px;top:335.47px;font-size:7.01px;line-height:1;font-weight:400;font-style:normal;color:#707070;white-space:pre;transform:scaleX(0.8696);transform-origin:left 50%;">Search Cases...</div>
<svg style="position:absolute;left:713.20px;top:336.40px" width="6" height="6" viewBox="0 0 6 6"><circle cx="2.5" cy="2.5" r="1.9" fill="none" stroke="#666" stroke-width="1.0"/><line x1="3.8" y1="3.8" x2="5.6" y2="5.6" stroke="#666" stroke-width="1.1"/></svg>
<div style="position:absolute;left:501.70px;top:353.54px;font-size:4.94px;line-height:1;font-weight:400;font-style:normal;color:#4a4a4a;white-space:pre;transform:scaleX(0.9524);transform-origin:left 50%;">Remarks</div>
<div style="position:absolute;left:574.60px;top:349.30px;width:147.30px;height:12.60px;background:#fff;border:1px solid #c9c9c9;border-radius:2px;box-sizing:border-box;"></div>
<div style="position:absolute;left:23.80px;top:382.00px;width:44.30px;height:11.70px;background:#fff;border:1px solid #c9c9c9;border-radius:2px;box-sizing:border-box;"></div>
<div style="position:absolute;left:30.20px;top:385.55px;font-size:6.16px;line-height:1;font-weight:400;font-style:normal;color:#7a5f4c;white-space:pre;transform:scaleX(0.8689);transform-origin:left 50%;">Bulk Edits</div>
<svg style="position:absolute;left:58.10px;top:387.55px" width="3.4" height="2.108" viewBox="0 0 3.4 2.108"><path d="M0 0 L3.4 0 L1.7 2.108Z" fill="#444"/></svg>
<div style="position:absolute;left:70.30px;top:382.00px;width:64.50px;height:11.70px;background:#fff;border:1px solid #c9c9c9;border-radius:2px;box-sizing:border-box;"></div>
<div style="position:absolute;left:73.63px;top:385.55px;font-size:6.16px;line-height:1;font-weight:400;font-style:normal;color:#7a5f4c;white-space:pre;transform:scaleX(0.8883);transform-origin:center 50%;">Reset to QAD Pricing</div>
<div style="position:absolute;left:24.00px;top:395.30px;width:712.00px;height:14.70px;background:#f3f3f3;border-radius:0px;box-sizing:border-box;"></div>
<div style="position:absolute;left:75.70px;top:395.80px;width:0.70px;height:13.20px;background:#ebe7e3;border-radius:0px;box-sizing:border-box;"></div>
<div style="position:absolute;left:151.20px;top:395.80px;width:0.70px;height:13.20px;background:#ebe7e3;border-radius:0px;box-sizing:border-box;"></div>
<div style="position:absolute;left:189.40px;top:395.80px;width:0.70px;height:13.20px;background:#ebe7e3;border-radius:0px;box-sizing:border-box;"></div>
<div style="position:absolute;left:227.30px;top:395.80px;width:0.70px;height:13.20px;background:#ebe7e3;border-radius:0px;box-sizing:border-box;"></div>
<div style="position:absolute;left:302.20px;top:395.80px;width:0.70px;height:13.20px;background:#ebe7e3;border-radius:0px;box-sizing:border-box;"></div>
<div style="position:absolute;left:377.20px;top:395.80px;width:0.70px;height:13.20px;background:#ebe7e3;border-radius:0px;box-sizing:border-box;"></div>
<div style="position:absolute;left:415.70px;top:395.80px;width:0.70px;height:13.20px;background:#ebe7e3;border-radius:0px;box-sizing:border-box;"></div>
<div style="position:absolute;left:490.70px;top:395.80px;width:0.70px;height:13.20px;background:#ebe7e3;border-radius:0px;box-sizing:border-box;"></div>
<div style="position:absolute;left:528.00px;top:395.80px;width:0.70px;height:13.20px;background:#ebe7e3;border-radius:0px;box-sizing:border-box;"></div>
<div style="position:absolute;left:604.10px;top:395.80px;width:0.70px;height:13.20px;background:#ebe7e3;border-radius:0px;box-sizing:border-box;"></div>
<div style="position:absolute;left:679.70px;top:395.80px;width:0.70px;height:13.20px;background:#ebe7e3;border-radius:0px;box-sizing:border-box;"></div>
<div style="position:absolute;left:716.70px;top:395.80px;width:0.70px;height:13.20px;background:#ebe7e3;border-radius:0px;box-sizing:border-box;"></div>
<div style="position:absolute;left:26.70px;top:399.90px;width:6.00px;height:6.00px;background:#fff;border:1px solid #bdbdbd;border-radius:1px;box-sizing:border-box;"></div>
<svg style="position:absolute;left:28.00px;top:401.40px" width="3.4" height="3.0" viewBox="0 0 3.4 3.0"><path d="M0.3 1.65 L1.29 2.70 L3.10 0.3" fill="none" stroke="#b8997f" stroke-width="0.8"/></svg>
<div style="position:absolute;left:60.78px;top:401.14px;font-size:4.40px;line-height:1;font-weight:700;font-style:normal;color:#4a4a4a;white-space:pre;">Line</div>
<div style="position:absolute;left:109.48px;top:401.14px;font-size:4.40px;line-height:1;font-weight:700;font-style:normal;color:#4a4a4a;white-space:pre;">Item</div>
<div style="position:absolute;left:161.78px;top:401.14px;font-size:4.40px;line-height:1;font-weight:700;font-style:normal;color:#4a4a4a;white-space:pre;">Quantity</div>
<div style="position:absolute;left:203.27px;top:401.14px;font-size:4.40px;line-height:1;font-weight:700;font-style:normal;color:#4a4a4a;white-space:pre;">UOM</div>
<div style="position:absolute;left:256.98px;top:401.14px;font-size:4.40px;line-height:1;font-weight:700;font-style:normal;color:#4a4a4a;white-space:pre;">Markup</div>
<div style="position:absolute;left:334.92px;top:401.14px;font-size:4.40px;line-height:1;font-weight:700;font-style:normal;color:#4a4a4a;white-space:pre;">Price</div>
<div style="position:absolute;left:387.04px;top:401.14px;font-size:4.40px;line-height:1;font-weight:700;font-style:normal;color:#4a4a4a;white-space:pre;">Currency</div>
<div style="position:absolute;left:449.58px;top:401.14px;font-size:4.40px;line-height:1;font-weight:700;font-style:normal;color:#4a4a4a;white-space:pre;">Ext</div>
<div style="position:absolute;left:506.05px;top:401.14px;font-size:4.40px;line-height:1;font-weight:700;font-style:normal;color:#4a4a4a;white-space:pre;">Net</div>
<div style="position:absolute;left:562.47px;top:401.14px;font-size:4.40px;line-height:1;font-weight:700;font-style:normal;color:#4a4a4a;white-space:pre;">Site</div>
<div style="position:absolute;left:633.32px;top:401.14px;font-size:4.40px;line-height:1;font-weight:700;font-style:normal;color:#4a4a4a;white-space:pre;">Promise</div>
<div style="position:absolute;left:690.33px;top:401.14px;font-size:4.40px;line-height:1;font-weight:700;font-style:normal;color:#4a4a4a;white-space:pre;">Actions</div>
<div style="position:absolute;left:26.50px;top:412.80px;width:6.00px;height:6.00px;background:#fff;border:1px solid #bdbdbd;border-radius:1px;box-sizing:border-box;"></div>
<svg style="position:absolute;left:27.80px;top:414.30px" width="3.4" height="3.0" viewBox="0 0 3.4 3.0"><path d="M0.3 1.65 L1.29 2.70 L3.10 0.3" fill="none" stroke="#b8997f" stroke-width="0.8"/></svg>
<div style="position:absolute;left:43.40px;top:413.20px;width:2.90px;height:5.60px;background:#e2e2e2;border-radius:0.6px;box-sizing:border-box;"></div>
<div style="position:absolute;left:44.10px;top:413.90px;width:0.70px;height:0.70px;background:#9a9a9a;border-radius:0px;box-sizing:border-box;"></div>
<div style="position:absolute;left:45.00px;top:413.90px;width:0.70px;height:0.70px;background:#9a9a9a;border-radius:0px;box-sizing:border-box;"></div>
<div style="position:absolute;left:44.10px;top:415.60px;width:0.70px;height:0.70px;background:#9a9a9a;border-radius:0px;box-sizing:border-box;"></div>
<div style="position:absolute;left:45.00px;top:415.60px;width:0.70px;height:0.70px;background:#9a9a9a;border-radius:0px;box-sizing:border-box;"></div>
<div style="position:absolute;left:44.10px;top:417.30px;width:0.70px;height:0.70px;background:#9a9a9a;border-radius:0px;box-sizing:border-box;"></div>
<div style="position:absolute;left:45.00px;top:417.30px;width:0.70px;height:0.70px;background:#9a9a9a;border-radius:0px;box-sizing:border-box;"></div>
<div style="position:absolute;left:56.60px;top:410.60px;width:17.20px;height:12.50px;background:#fff;border:1px solid #c9c9c9;border-radius:2px;box-sizing:border-box;"></div>
<div style="position:absolute;left:63.69px;top:413.75px;font-size:6.16px;line-height:1;font-weight:400;font-style:normal;color:#444;white-space:pre;transform:scaleX(0.9091);transform-origin:center 50%;">1</div>
<div style="position:absolute;left:79.40px;top:413.66px;font-size:5.60px;line-height:1;font-weight:400;font-style:normal;color:#1b84d2;white-space:pre;">XH500BK</div>
<div style="position:absolute;left:79.40px;top:422.46px;font-size:4.90px;line-height:1;font-weight:400;font-style:normal;color:#3a3a3a;white-space:pre;">500 MCM XHHW-2 BK</div>
<div style="position:absolute;left:154.60px;top:411.20px;width:32.20px;height:11.70px;background:#fff;border:1px solid #c9c9c9;border-radius:2px;box-sizing:border-box;"></div>
<div style="position:absolute;left:163.64px;top:414.95px;font-size:5.80px;line-height:1;font-weight:400;font-style:normal;color:#222;white-space:pre;">1,000</div>
<div style="position:absolute;left:192.40px;top:411.20px;width:32.10px;height:11.70px;background:#fff;border:1px solid #c9c9c9;border-radius:2px;box-sizing:border-box;"></div>
<div style="position:absolute;left:196.60px;top:415.44px;font-size:5.28px;line-height:1;font-weight:400;font-style:normal;color:#444;white-space:pre;transform:scaleX(0.7441);transform-origin:left 50%;">FT</div>
<svg style="position:absolute;left:217.00px;top:416.38px" width="3.6" height="2.232" viewBox="0 0 3.6 2.232"><path d="M0 0 L3.6 0 L1.8 2.232Z" fill="#444"/></svg>
<div style="position:absolute;left:230.10px;top:411.20px;width:69.50px;height:11.70px;background:#fff;border:1px solid #c9c9c9;border-radius:2px;box-sizing:border-box;"></div>
<div style="position:absolute;left:235.00px;top:415.44px;font-size:5.28px;line-height:1;font-weight:400;font-style:normal;color:#444;white-space:pre;transform:scaleX(0.8081);transform-origin:left 50%;">None</div>
<svg style="position:absolute;left:292.20px;top:416.38px" width="3.6" height="2.232" viewBox="0 0 3.6 2.232"><path d="M0 0 L3.6 0 L1.8 2.232Z" fill="#444"/></svg>
<div style="position:absolute;left:337.85px;top:415.03px;font-size:5.30px;line-height:1;font-weight:400;font-style:normal;color:#333;white-space:pre;">$99.99000</div>
<svg style="position:absolute;left:364.30px;top:413.80px" width="5.2" height="6" viewBox="0 0 5.2 6"><path d="M1.2 2.8 L1.2 1.9 A1.4 1.4 0 0 1 4 1.9 L4 2.8" fill="none" stroke="#666" stroke-width="0.8"/><rect x="0.5" y="2.7" width="4.2" height="3" rx="0.4" fill="#666"/><rect x="2.3" y="3.6" width="0.6" height="1.2" fill="#fff"/></svg>
<div style="position:absolute;left:391.29px;top:414.86px;font-size:5.60px;line-height:1;font-weight:400;font-style:normal;color:#333;white-space:pre;">USD</div>
<div style="position:absolute;left:461.67px;top:415.03px;font-size:5.30px;line-height:1;font-weight:400;font-style:normal;color:#333;white-space:pre;">$99,990.00</div>
<div style="position:absolute;left:503.04px;top:414.75px;font-size:5.80px;line-height:1;font-weight:400;font-style:normal;color:#333;white-space:pre;">1,630</div>
<div style="position:absolute;left:532.00px;top:411.20px;width:69.50px;height:11.70px;background:#fff;border:1px solid #c9c9c9;border-radius:2px;box-sizing:border-box;"></div>
<div style="position:absolute;left:536.50px;top:415.44px;font-size:5.28px;line-height:1;font-weight:400;font-style:normal;color:#444;white-space:pre;transform:scaleX(0.7788);transform-origin:left 50%;">200-TX Plant</div>
<svg style="position:absolute;left:594.20px;top:416.38px" width="3.6" height="2.232" viewBox="0 0 3.6 2.232"><path d="M0 0 L3.6 0 L1.8 2.232Z" fill="#444"/></svg>
<div style="position:absolute;left:607.20px;top:411.00px;width:69.40px;height:11.70px;background:#fff;border:1px solid #a9a9a9;border-radius:2px;box-sizing:border-box;"></div>
<div style="position:absolute;left:612.00px;top:415.44px;font-size:5.28px;line-height:1;font-weight:400;font-style:normal;color:#444;white-space:pre;transform:scaleX(0.7970);transform-origin:left 50%;">No Value</div>
<svg style="position:absolute;left:669.40px;top:416.38px" width="3.6" height="2.232" viewBox="0 0 3.6 2.232"><path d="M0 0 L3.6 0 L1.8 2.232Z" fill="#444"/></svg>
<div style="position:absolute;left:607.60px;top:423.20px;width:69.00px;height:10.00px;background:#efefef;border:1px solid #dedede;border-radius:2px;box-sizing:border-box;"></div>
<svg style="position:absolute;left:669.80px;top:425.90px" width="4.4" height="4.4" viewBox="0 0 4.4 4.4"><rect x="0.2" y="0.6" width="4" height="3.6" rx="0.4" fill="#c8c8c8"/><rect x="0.8" y="1.6" width="2.8" height="2" fill="#e4e4e4"/></svg>
<div style="position:absolute;left:684.00px;top:411.00px;width:7.20px;height:7.40px;background:#ececec;border:1px solid #b9b9b9;border-radius:1.5px;box-sizing:border-box;"></div>
<svg style="position:absolute;left:684.80px;top:412.40px" width="5.6" height="4.6" viewBox="0 0 5.6 4.6"><ellipse cx="2.8" cy="2.3" rx="2.4" ry="1.5" fill="none" stroke="#555" stroke-width="0.7"/><circle cx="2.8" cy="2.3" r="0.8" fill="#555"/></svg>
<div style="position:absolute;left:694.00px;top:411.00px;width:6.60px;height:7.40px;background:#ececec;border:1px solid #b9b9b9;border-radius:1.5px;box-sizing:border-box;"></div>
<svg style="position:absolute;left:695.30px;top:412.20px" width="4" height="5" viewBox="0 0 4 5"><rect x="0.6" y="1.2" width="2.8" height="3.5" rx="0.3" fill="none" stroke="#555" stroke-width="0.7"/><line x1="0.2" y1="1" x2="3.8" y2="1" stroke="#555" stroke-width="0.6"/><rect x="1.4" y="0.2" width="1.2" height="0.7" fill="#555"/></svg>
<div style="position:absolute;left:24.00px;top:435.20px;width:693.00px;height:1.00px;background:#e5e5e5;border-radius:0px;box-sizing:border-box;"></div>
<div style="position:absolute;left:26.50px;top:438.70px;width:6.00px;height:6.00px;background:#fff;border:1px solid #bdbdbd;border-radius:1px;box-sizing:border-box;"></div>
<svg style="position:absolute;left:27.80px;top:440.20px" width="3.4" height="3.0" viewBox="0 0 3.4 3.0"><path d="M0.3 1.65 L1.29 2.70 L3.10 0.3" fill="none" stroke="#b8997f" stroke-width="0.8"/></svg>
<div style="position:absolute;left:43.40px;top:439.10px;width:2.90px;height:5.60px;background:#e2e2e2;border-radius:0.6px;box-sizing:border-box;"></div>
<div style="position:absolute;left:44.10px;top:439.80px;width:0.70px;height:0.70px;background:#9a9a9a;border-radius:0px;box-sizing:border-box;"></div>
<div style="position:absolute;left:45.00px;top:439.80px;width:0.70px;height:0.70px;background:#9a9a9a;border-radius:0px;box-sizing:border-box;"></div>
<div style="position:absolute;left:44.10px;top:441.50px;width:0.70px;height:0.70px;background:#9a9a9a;border-radius:0px;box-sizing:border-box;"></div>
<div style="position:absolute;left:45.00px;top:441.50px;width:0.70px;height:0.70px;background:#9a9a9a;border-radius:0px;box-sizing:border-box;"></div>
<div style="position:absolute;left:44.10px;top:443.20px;width:0.70px;height:0.70px;background:#9a9a9a;border-radius:0px;box-sizing:border-box;"></div>
<div style="position:absolute;left:45.00px;top:443.20px;width:0.70px;height:0.70px;background:#9a9a9a;border-radius:0px;box-sizing:border-box;"></div>
<div style="position:absolute;left:56.60px;top:436.50px;width:17.20px;height:12.50px;background:#fff;border:1px solid #c9c9c9;border-radius:2px;box-sizing:border-box;"></div>
<div style="position:absolute;left:63.69px;top:439.65px;font-size:6.16px;line-height:1;font-weight:400;font-style:normal;color:#444;white-space:pre;transform:scaleX(0.9091);transform-origin:center 50%;">2</div>
<div style="position:absolute;left:79.40px;top:439.56px;font-size:5.60px;line-height:1;font-weight:400;font-style:normal;color:#1b84d2;white-space:pre;">XH500BK</div>
<div style="position:absolute;left:79.40px;top:448.36px;font-size:4.90px;line-height:1;font-weight:400;font-style:normal;color:#3a3a3a;white-space:pre;">500 MCM XHHW-2 BK</div>
<div style="position:absolute;left:154.60px;top:437.10px;width:32.20px;height:11.70px;background:#fff;border:1px solid #c9c9c9;border-radius:2px;box-sizing:border-box;"></div>
<div style="position:absolute;left:166.06px;top:440.85px;font-size:5.80px;line-height:1;font-weight:400;font-style:normal;color:#222;white-space:pre;">100</div>
<div style="position:absolute;left:192.40px;top:437.10px;width:32.10px;height:11.70px;background:#fff;border:1px solid #c9c9c9;border-radius:2px;box-sizing:border-box;"></div>
<div style="position:absolute;left:196.60px;top:441.34px;font-size:5.28px;line-height:1;font-weight:400;font-style:normal;color:#444;white-space:pre;transform:scaleX(0.7441);transform-origin:left 50%;">FT</div>
<svg style="position:absolute;left:217.00px;top:442.28px" width="3.6" height="2.232" viewBox="0 0 3.6 2.232"><path d="M0 0 L3.6 0 L1.8 2.232Z" fill="#444"/></svg>
<div style="position:absolute;left:230.10px;top:437.10px;width:69.50px;height:11.70px;background:#fff;border:1px solid #c9c9c9;border-radius:2px;box-sizing:border-box;"></div>
<div style="position:absolute;left:235.00px;top:441.34px;font-size:5.28px;line-height:1;font-weight:400;font-style:normal;color:#444;white-space:pre;transform:scaleX(0.8081);transform-origin:left 50%;">None</div>
<svg style="position:absolute;left:292.20px;top:442.28px" width="3.6" height="2.232" viewBox="0 0 3.6 2.232"><path d="M0 0 L3.6 0 L1.8 2.232Z" fill="#444"/></svg>
<div style="position:absolute;left:337.85px;top:440.93px;font-size:5.30px;line-height:1;font-weight:400;font-style:normal;color:#333;white-space:pre;">$99.99000</div>
<svg style="position:absolute;left:364.30px;top:439.70px" width="5.2" height="6" viewBox="0 0 5.2 6"><path d="M1.2 2.8 L1.2 1.9 A1.4 1.4 0 0 1 4 1.9 L4 2.8" fill="none" stroke="#666" stroke-width="0.8"/><rect x="0.5" y="2.7" width="4.2" height="3" rx="0.4" fill="#666"/><rect x="2.3" y="3.6" width="0.6" height="1.2" fill="#fff"/></svg>
<div style="position:absolute;left:391.29px;top:440.76px;font-size:5.60px;line-height:1;font-weight:400;font-style:normal;color:#333;white-space:pre;">USD</div>
<div style="position:absolute;left:464.62px;top:440.93px;font-size:5.30px;line-height:1;font-weight:400;font-style:normal;color:#333;white-space:pre;">$9,999.00</div>
<div style="position:absolute;left:505.46px;top:440.65px;font-size:5.80px;line-height:1;font-weight:400;font-style:normal;color:#333;white-space:pre;">163</div>
<div style="position:absolute;left:532.00px;top:437.10px;width:69.50px;height:11.70px;background:#fff;border:1px solid #c9c9c9;border-radius:2px;box-sizing:border-box;"></div>
<div style="position:absolute;left:536.50px;top:441.34px;font-size:5.28px;line-height:1;font-weight:400;font-style:normal;color:#444;white-space:pre;transform:scaleX(0.7788);transform-origin:left 50%;">200-TX Plant</div>
<svg style="position:absolute;left:594.20px;top:442.28px" width="3.6" height="2.232" viewBox="0 0 3.6 2.232"><path d="M0 0 L3.6 0 L1.8 2.232Z" fill="#444"/></svg>
<div style="position:absolute;left:607.20px;top:436.90px;width:69.40px;height:11.70px;background:#fff;border:1px solid #a9a9a9;border-radius:2px;box-sizing:border-box;"></div>
<div style="position:absolute;left:612.00px;top:441.34px;font-size:5.28px;line-height:1;font-weight:400;font-style:normal;color:#444;white-space:pre;transform:scaleX(0.7970);transform-origin:left 50%;">No Value</div>
<svg style="position:absolute;left:669.40px;top:442.28px" width="3.6" height="2.232" viewBox="0 0 3.6 2.232"><path d="M0 0 L3.6 0 L1.8 2.232Z" fill="#444"/></svg>
<div style="position:absolute;left:607.60px;top:449.10px;width:69.00px;height:10.00px;background:#efefef;border:1px solid #dedede;border-radius:2px;box-sizing:border-box;"></div>
<svg style="position:absolute;left:669.80px;top:451.80px" width="4.4" height="4.4" viewBox="0 0 4.4 4.4"><rect x="0.2" y="0.6" width="4" height="3.6" rx="0.4" fill="#c8c8c8"/><rect x="0.8" y="1.6" width="2.8" height="2" fill="#e4e4e4"/></svg>
<div style="position:absolute;left:684.00px;top:436.90px;width:7.20px;height:7.40px;background:#ececec;border:1px solid #b9b9b9;border-radius:1.5px;box-sizing:border-box;"></div>
<svg style="position:absolute;left:684.80px;top:438.30px" width="5.6" height="4.6" viewBox="0 0 5.6 4.6"><ellipse cx="2.8" cy="2.3" rx="2.4" ry="1.5" fill="none" stroke="#555" stroke-width="0.7"/><circle cx="2.8" cy="2.3" r="0.8" fill="#555"/></svg>
<div style="position:absolute;left:694.00px;top:436.90px;width:6.60px;height:7.40px;background:#ececec;border:1px solid #b9b9b9;border-radius:1.5px;box-sizing:border-box;"></div>
<svg style="position:absolute;left:695.30px;top:438.10px" width="4" height="5" viewBox="0 0 4 5"><rect x="0.6" y="1.2" width="2.8" height="3.5" rx="0.3" fill="none" stroke="#555" stroke-width="0.7"/><line x1="0.2" y1="1" x2="3.8" y2="1" stroke="#555" stroke-width="0.6"/><rect x="1.4" y="0.2" width="1.2" height="0.7" fill="#555"/></svg>
<div style="position:absolute;left:24.00px;top:461.10px;width:693.00px;height:1.00px;background:#e5e5e5;border-radius:0px;box-sizing:border-box;"></div>
<div style="position:absolute;left:26.50px;top:464.60px;width:6.00px;height:6.00px;background:#fff;border:1px solid #bdbdbd;border-radius:1px;box-sizing:border-box;"></div>
<svg style="position:absolute;left:27.80px;top:466.10px" width="3.4" height="3.0" viewBox="0 0 3.4 3.0"><path d="M0.3 1.65 L1.29 2.70 L3.10 0.3" fill="none" stroke="#b8997f" stroke-width="0.8"/></svg>
<div style="position:absolute;left:43.40px;top:465.00px;width:2.90px;height:5.60px;background:#e2e2e2;border-radius:0.6px;box-sizing:border-box;"></div>
<div style="position:absolute;left:44.10px;top:465.70px;width:0.70px;height:0.70px;background:#9a9a9a;border-radius:0px;box-sizing:border-box;"></div>
<div style="position:absolute;left:45.00px;top:465.70px;width:0.70px;height:0.70px;background:#9a9a9a;border-radius:0px;box-sizing:border-box;"></div>
<div style="position:absolute;left:44.10px;top:467.40px;width:0.70px;height:0.70px;background:#9a9a9a;border-radius:0px;box-sizing:border-box;"></div>
<div style="position:absolute;left:45.00px;top:467.40px;width:0.70px;height:0.70px;background:#9a9a9a;border-radius:0px;box-sizing:border-box;"></div>
<div style="position:absolute;left:44.10px;top:469.10px;width:0.70px;height:0.70px;background:#9a9a9a;border-radius:0px;box-sizing:border-box;"></div>
<div style="position:absolute;left:45.00px;top:469.10px;width:0.70px;height:0.70px;background:#9a9a9a;border-radius:0px;box-sizing:border-box;"></div>
<div style="position:absolute;left:56.60px;top:462.40px;width:17.20px;height:12.50px;background:#fff;border:1px solid #c9c9c9;border-radius:2px;box-sizing:border-box;"></div>
<div style="position:absolute;left:63.69px;top:465.55px;font-size:6.16px;line-height:1;font-weight:400;font-style:normal;color:#444;white-space:pre;transform:scaleX(0.9091);transform-origin:center 50%;">3</div>
<div style="position:absolute;left:79.40px;top:465.46px;font-size:5.60px;line-height:1;font-weight:400;font-style:normal;color:#1b84d2;white-space:pre;">XH500AL</div>
<div style="position:absolute;left:79.40px;top:474.26px;font-size:4.90px;line-height:1;font-weight:400;font-style:normal;color:#3a3a3a;white-space:pre;">500 MCM XHHW-2 AL BK</div>
<div style="position:absolute;left:154.60px;top:463.00px;width:32.20px;height:11.70px;background:#fff;border:1px solid #c9c9c9;border-radius:2px;box-sizing:border-box;"></div>
<div style="position:absolute;left:169.29px;top:466.75px;font-size:5.80px;line-height:1;font-weight:400;font-style:normal;color:#222;white-space:pre;">5</div>
<div style="position:absolute;left:192.40px;top:463.00px;width:32.10px;height:11.70px;background:#fff;border:1px solid #c9c9c9;border-radius:2px;box-sizing:border-box;"></div>
<div style="position:absolute;left:196.60px;top:467.24px;font-size:5.28px;line-height:1;font-weight:400;font-style:normal;color:#444;white-space:pre;transform:scaleX(0.7441);transform-origin:left 50%;">FT</div>
<svg style="position:absolute;left:217.00px;top:468.18px" width="3.6" height="2.232" viewBox="0 0 3.6 2.232"><path d="M0 0 L3.6 0 L1.8 2.232Z" fill="#444"/></svg>
<div style="position:absolute;left:230.10px;top:463.00px;width:69.50px;height:11.70px;background:#fff;border:1px solid #c9c9c9;border-radius:2px;box-sizing:border-box;"></div>
<div style="position:absolute;left:235.00px;top:467.24px;font-size:5.28px;line-height:1;font-weight:400;font-style:normal;color:#444;white-space:pre;transform:scaleX(0.8081);transform-origin:left 50%;">None</div>
<svg style="position:absolute;left:292.20px;top:468.18px" width="3.6" height="2.232" viewBox="0 0 3.6 2.232"><path d="M0 0 L3.6 0 L1.8 2.232Z" fill="#444"/></svg>
<div style="position:absolute;left:340.79px;top:466.83px;font-size:5.30px;line-height:1;font-weight:400;font-style:normal;color:#333;white-space:pre;">$3.54300</div>
<svg style="position:absolute;left:364.30px;top:465.60px" width="5.2" height="6" viewBox="0 0 5.2 6"><path d="M1.2 2.8 L1.2 1.9 A1.4 1.4 0 0 1 4 1.9 L4 2.8" fill="none" stroke="#666" stroke-width="0.8"/><rect x="0.5" y="2.7" width="4.2" height="3" rx="0.4" fill="#666"/><rect x="2.3" y="3.6" width="0.6" height="1.2" fill="#fff"/></svg>
<div style="position:absolute;left:391.29px;top:466.66px;font-size:5.60px;line-height:1;font-weight:400;font-style:normal;color:#333;white-space:pre;">USD</div>
<div style="position:absolute;left:471.99px;top:466.83px;font-size:5.30px;line-height:1;font-weight:400;font-style:normal;color:#333;white-space:pre;">$17.72</div>
<div style="position:absolute;left:508.69px;top:466.55px;font-size:5.80px;line-height:1;font-weight:400;font-style:normal;color:#333;white-space:pre;">3</div>
<div style="position:absolute;left:532.00px;top:463.00px;width:69.50px;height:11.70px;background:#fff;border:1px solid #c9c9c9;border-radius:2px;box-sizing:border-box;"></div>
<div style="position:absolute;left:536.50px;top:467.24px;font-size:5.28px;line-height:1;font-weight:400;font-style:normal;color:#444;white-space:pre;transform:scaleX(0.7788);transform-origin:left 50%;">200-TX Plant</div>
<svg style="position:absolute;left:594.20px;top:468.18px" width="3.6" height="2.232" viewBox="0 0 3.6 2.232"><path d="M0 0 L3.6 0 L1.8 2.232Z" fill="#444"/></svg>
<div style="position:absolute;left:607.20px;top:462.80px;width:69.40px;height:11.70px;background:#fff;border:1px solid #a9a9a9;border-radius:2px;box-sizing:border-box;"></div>
<div style="position:absolute;left:612.00px;top:467.24px;font-size:5.28px;line-height:1;font-weight:400;font-style:normal;color:#444;white-space:pre;transform:scaleX(0.7970);transform-origin:left 50%;">No Value</div>
<svg style="position:absolute;left:669.40px;top:468.18px" width="3.6" height="2.232" viewBox="0 0 3.6 2.232"><path d="M0 0 L3.6 0 L1.8 2.232Z" fill="#444"/></svg>
<div style="position:absolute;left:607.60px;top:475.00px;width:69.00px;height:10.00px;background:#efefef;border:1px solid #dedede;border-radius:2px;box-sizing:border-box;"></div>
<svg style="position:absolute;left:669.80px;top:477.70px" width="4.4" height="4.4" viewBox="0 0 4.4 4.4"><rect x="0.2" y="0.6" width="4" height="3.6" rx="0.4" fill="#c8c8c8"/><rect x="0.8" y="1.6" width="2.8" height="2" fill="#e4e4e4"/></svg>
<div style="position:absolute;left:684.00px;top:462.80px;width:7.20px;height:7.40px;background:#ececec;border:1px solid #b9b9b9;border-radius:1.5px;box-sizing:border-box;"></div>
<svg style="position:absolute;left:684.80px;top:464.20px" width="5.6" height="4.6" viewBox="0 0 5.6 4.6"><ellipse cx="2.8" cy="2.3" rx="2.4" ry="1.5" fill="none" stroke="#555" stroke-width="0.7"/><circle cx="2.8" cy="2.3" r="0.8" fill="#555"/></svg>
<div style="position:absolute;left:694.00px;top:462.80px;width:6.60px;height:7.40px;background:#ececec;border:1px solid #b9b9b9;border-radius:1.5px;box-sizing:border-box;"></div>
<svg style="position:absolute;left:695.30px;top:464.00px" width="4" height="5" viewBox="0 0 4 5"><rect x="0.6" y="1.2" width="2.8" height="3.5" rx="0.3" fill="none" stroke="#555" stroke-width="0.7"/><line x1="0.2" y1="1" x2="3.8" y2="1" stroke="#555" stroke-width="0.6"/><rect x="1.4" y="0.2" width="1.2" height="0.7" fill="#555"/></svg>
<div style="position:absolute;left:24.00px;top:487.00px;width:693.00px;height:1.00px;background:#e5e5e5;border-radius:0px;box-sizing:border-box;"></div>
<div style="position:absolute;left:26.50px;top:490.50px;width:6.00px;height:6.00px;background:#fff;border:1px solid #bdbdbd;border-radius:1px;box-sizing:border-box;"></div>
<svg style="position:absolute;left:27.80px;top:492.00px" width="3.4" height="3.0" viewBox="0 0 3.4 3.0"><path d="M0.3 1.65 L1.29 2.70 L3.10 0.3" fill="none" stroke="#b8997f" stroke-width="0.8"/></svg>
<div style="position:absolute;left:43.40px;top:490.90px;width:2.90px;height:5.60px;background:#e2e2e2;border-radius:0.6px;box-sizing:border-box;"></div>
<div style="position:absolute;left:44.10px;top:491.60px;width:0.70px;height:0.70px;background:#9a9a9a;border-radius:0px;box-sizing:border-box;"></div>
<div style="position:absolute;left:45.00px;top:491.60px;width:0.70px;height:0.70px;background:#9a9a9a;border-radius:0px;box-sizing:border-box;"></div>
<div style="position:absolute;left:44.10px;top:493.30px;width:0.70px;height:0.70px;background:#9a9a9a;border-radius:0px;box-sizing:border-box;"></div>
<div style="position:absolute;left:45.00px;top:493.30px;width:0.70px;height:0.70px;background:#9a9a9a;border-radius:0px;box-sizing:border-box;"></div>
<div style="position:absolute;left:44.10px;top:495.00px;width:0.70px;height:0.70px;background:#9a9a9a;border-radius:0px;box-sizing:border-box;"></div>
<div style="position:absolute;left:45.00px;top:495.00px;width:0.70px;height:0.70px;background:#9a9a9a;border-radius:0px;box-sizing:border-box;"></div>
<div style="position:absolute;left:56.60px;top:488.30px;width:17.20px;height:12.50px;background:#fff;border:1px solid #c9c9c9;border-radius:2px;box-sizing:border-box;"></div>
<div style="position:absolute;left:63.69px;top:491.45px;font-size:6.16px;line-height:1;font-weight:400;font-style:normal;color:#444;white-space:pre;transform:scaleX(0.9091);transform-origin:center 50%;">4</div>
<div style="position:absolute;left:79.40px;top:491.36px;font-size:5.60px;line-height:1;font-weight:400;font-style:normal;color:#1b84d2;white-space:pre;">0SPLEXB4/03</div>
<div style="position:absolute;left:79.40px;top:500.16px;font-size:4.90px;line-height:1;font-weight:400;font-style:normal;color:#3a3a3a;white-space:pre;">4/03 BST19S TWIST</div>
<div style="position:absolute;left:154.60px;top:488.90px;width:32.20px;height:11.70px;background:#fff;border:1px solid #c9c9c9;border-radius:2px;box-sizing:border-box;"></div>
<div style="position:absolute;left:169.29px;top:492.65px;font-size:5.80px;line-height:1;font-weight:400;font-style:normal;color:#222;white-space:pre;">4</div>
<div style="position:absolute;left:192.40px;top:488.90px;width:32.10px;height:11.70px;background:#fff;border:1px solid #c9c9c9;border-radius:2px;box-sizing:border-box;"></div>
<div style="position:absolute;left:196.60px;top:493.14px;font-size:5.28px;line-height:1;font-weight:400;font-style:normal;color:#444;white-space:pre;transform:scaleX(0.7441);transform-origin:left 50%;">FT</div>
<svg style="position:absolute;left:217.00px;top:494.08px" width="3.6" height="2.232" viewBox="0 0 3.6 2.232"><path d="M0 0 L3.6 0 L1.8 2.232Z" fill="#444"/></svg>
<div style="position:absolute;left:230.10px;top:488.90px;width:69.50px;height:11.70px;background:#fff;border:1px solid #c9c9c9;border-radius:2px;box-sizing:border-box;"></div>
<div style="position:absolute;left:235.00px;top:493.14px;font-size:5.28px;line-height:1;font-weight:400;font-style:normal;color:#444;white-space:pre;transform:scaleX(0.8081);transform-origin:left 50%;">None</div>
<svg style="position:absolute;left:292.20px;top:494.08px" width="3.6" height="2.232" viewBox="0 0 3.6 2.232"><path d="M0 0 L3.6 0 L1.8 2.232Z" fill="#444"/></svg>
<div style="position:absolute;left:337.85px;top:492.73px;font-size:5.30px;line-height:1;font-weight:400;font-style:normal;color:#333;white-space:pre;">$99.99000</div>
<svg style="position:absolute;left:364.30px;top:491.50px" width="5.2" height="6" viewBox="0 0 5.2 6"><path d="M1.2 2.8 L1.2 1.9 A1.4 1.4 0 0 1 4 1.9 L4 2.8" fill="none" stroke="#666" stroke-width="0.8"/><rect x="0.5" y="2.7" width="4.2" height="3" rx="0.4" fill="#666"/><rect x="2.3" y="3.6" width="0.6" height="1.2" fill="#fff"/></svg>
<div style="position:absolute;left:391.29px;top:492.56px;font-size:5.60px;line-height:1;font-weight:400;font-style:normal;color:#333;white-space:pre;">USD</div>
<div style="position:absolute;left:469.04px;top:492.73px;font-size:5.30px;line-height:1;font-weight:400;font-style:normal;color:#333;white-space:pre;">$399.96</div>
<div style="position:absolute;left:508.69px;top:492.45px;font-size:5.80px;line-height:1;font-weight:400;font-style:normal;color:#333;white-space:pre;">8</div>
<div style="position:absolute;left:532.00px;top:488.90px;width:69.50px;height:11.70px;background:#fff;border:1px solid #c9c9c9;border-radius:2px;box-sizing:border-box;"></div>
<div style="position:absolute;left:536.50px;top:493.14px;font-size:5.28px;line-height:1;font-weight:400;font-style:normal;color:#444;white-space:pre;transform:scaleX(0.7788);transform-origin:left 50%;">200-TX Plant</div>
<svg style="position:absolute;left:594.20px;top:494.08px" width="3.6" height="2.232" viewBox="0 0 3.6 2.232"><path d="M0 0 L3.6 0 L1.8 2.232Z" fill="#444"/></svg>
<div style="position:absolute;left:607.20px;top:488.70px;width:69.40px;height:11.70px;background:#fff;border:1px solid #a9a9a9;border-radius:2px;box-sizing:border-box;"></div>
<div style="position:absolute;left:612.00px;top:493.14px;font-size:5.28px;line-height:1;font-weight:400;font-style:normal;color:#444;white-space:pre;transform:scaleX(0.7970);transform-origin:left 50%;">No Value</div>
<svg style="position:absolute;left:669.40px;top:494.08px" width="3.6" height="2.232" viewBox="0 0 3.6 2.232"><path d="M0 0 L3.6 0 L1.8 2.232Z" fill="#444"/></svg>
<div style="position:absolute;left:607.60px;top:500.90px;width:69.00px;height:10.00px;background:#efefef;border:1px solid #dedede;border-radius:2px;box-sizing:border-box;"></div>
<svg style="position:absolute;left:669.80px;top:503.60px" width="4.4" height="4.4" viewBox="0 0 4.4 4.4"><rect x="0.2" y="0.6" width="4" height="3.6" rx="0.4" fill="#c8c8c8"/><rect x="0.8" y="1.6" width="2.8" height="2" fill="#e4e4e4"/></svg>
<div style="position:absolute;left:684.00px;top:488.70px;width:7.20px;height:7.40px;background:#ececec;border:1px solid #b9b9b9;border-radius:1.5px;box-sizing:border-box;"></div>
<svg style="position:absolute;left:684.80px;top:490.10px" width="5.6" height="4.6" viewBox="0 0 5.6 4.6"><ellipse cx="2.8" cy="2.3" rx="2.4" ry="1.5" fill="none" stroke="#555" stroke-width="0.7"/><circle cx="2.8" cy="2.3" r="0.8" fill="#555"/></svg>
<div style="position:absolute;left:694.00px;top:488.70px;width:6.60px;height:7.40px;background:#ececec;border:1px solid #b9b9b9;border-radius:1.5px;box-sizing:border-box;"></div>
<svg style="position:absolute;left:695.30px;top:489.90px" width="4" height="5" viewBox="0 0 4 5"><rect x="0.6" y="1.2" width="2.8" height="3.5" rx="0.3" fill="none" stroke="#555" stroke-width="0.7"/><line x1="0.2" y1="1" x2="3.8" y2="1" stroke="#555" stroke-width="0.6"/><rect x="1.4" y="0.2" width="1.2" height="0.7" fill="#555"/></svg>
<div style="position:absolute;left:24.00px;top:512.90px;width:693.00px;height:1.00px;background:#e5e5e5;border-radius:0px;box-sizing:border-box;"></div>
<div style="position:absolute;left:26.50px;top:516.40px;width:6.00px;height:6.00px;background:#fff;border:1px solid #bdbdbd;border-radius:1px;box-sizing:border-box;"></div>
<div style="position:absolute;left:43.40px;top:516.80px;width:2.90px;height:5.60px;background:#e2e2e2;border-radius:0.6px;box-sizing:border-box;"></div>
<div style="position:absolute;left:44.10px;top:517.50px;width:0.70px;height:0.70px;background:#9a9a9a;border-radius:0px;box-sizing:border-box;"></div>
<div style="position:absolute;left:45.00px;top:517.50px;width:0.70px;height:0.70px;background:#9a9a9a;border-radius:0px;box-sizing:border-box;"></div>
<div style="position:absolute;left:44.10px;top:519.20px;width:0.70px;height:0.70px;background:#9a9a9a;border-radius:0px;box-sizing:border-box;"></div>
<div style="position:absolute;left:45.00px;top:519.20px;width:0.70px;height:0.70px;background:#9a9a9a;border-radius:0px;box-sizing:border-box;"></div>
<div style="position:absolute;left:44.10px;top:520.90px;width:0.70px;height:0.70px;background:#9a9a9a;border-radius:0px;box-sizing:border-box;"></div>
<div style="position:absolute;left:45.00px;top:520.90px;width:0.70px;height:0.70px;background:#9a9a9a;border-radius:0px;box-sizing:border-box;"></div>
<div style="position:absolute;left:56.60px;top:514.20px;width:17.20px;height:12.50px;background:#fff;border:1px solid #c9c9c9;border-radius:2px;box-sizing:border-box;"></div>
<div style="position:absolute;left:63.69px;top:517.35px;font-size:6.16px;line-height:1;font-weight:400;font-style:normal;color:#444;white-space:pre;transform:scaleX(0.9091);transform-origin:center 50%;">5</div>
<div style="position:absolute;left:79.40px;top:517.26px;font-size:5.60px;line-height:1;font-weight:400;font-style:normal;color:#1b84d2;white-space:pre;">0AAC2K350/3</div>
<div style="position:absolute;left:79.40px;top:526.06px;font-size:4.90px;line-height:1;font-weight:400;font-style:normal;color:#3a3a3a;white-space:pre;">350/3 RHW-2 2kV AAC BCG</div>
<div style="position:absolute;left:154.60px;top:514.80px;width:32.20px;height:11.70px;background:#fff;border:1px solid #c9c9c9;border-radius:2px;box-sizing:border-box;"></div>
<div style="position:absolute;left:169.29px;top:518.55px;font-size:5.80px;line-height:1;font-weight:400;font-style:normal;color:#222;white-space:pre;">3</div>
<div style="position:absolute;left:192.40px;top:514.80px;width:32.10px;height:11.70px;background:#fff;border:1px solid #c9c9c9;border-radius:2px;box-sizing:border-box;"></div>
<div style="position:absolute;left:196.60px;top:519.04px;font-size:5.28px;line-height:1;font-weight:400;font-style:normal;color:#444;white-space:pre;transform:scaleX(0.7441);transform-origin:left 50%;">FT</div>
<svg style="position:absolute;left:217.00px;top:519.98px" width="3.6" height="2.232" viewBox="0 0 3.6 2.232"><path d="M0 0 L3.6 0 L1.8 2.232Z" fill="#444"/></svg>
<div style="position:absolute;left:230.10px;top:514.80px;width:69.50px;height:11.70px;background:#fff;border:1px solid #c9c9c9;border-radius:2px;box-sizing:border-box;"></div>
<div style="position:absolute;left:235.00px;top:519.04px;font-size:5.28px;line-height:1;font-weight:400;font-style:normal;color:#444;white-space:pre;transform:scaleX(0.8081);transform-origin:left 50%;">None</div>
<svg style="position:absolute;left:292.20px;top:519.98px" width="3.6" height="2.232" viewBox="0 0 3.6 2.232"><path d="M0 0 L3.6 0 L1.8 2.232Z" fill="#444"/></svg>
<div style="position:absolute;left:337.85px;top:518.63px;font-size:5.30px;line-height:1;font-weight:400;font-style:normal;color:#333;white-space:pre;">$99.99000</div>
<svg style="position:absolute;left:364.30px;top:517.40px" width="5.2" height="6" viewBox="0 0 5.2 6"><path d="M1.2 2.8 L1.2 1.9 A1.4 1.4 0 0 1 4 1.9 L4 2.8" fill="none" stroke="#666" stroke-width="0.8"/><rect x="0.5" y="2.7" width="4.2" height="3" rx="0.4" fill="#666"/><rect x="2.3" y="3.6" width="0.6" height="1.2" fill="#fff"/></svg>
<div style="position:absolute;left:391.29px;top:518.46px;font-size:5.60px;line-height:1;font-weight:400;font-style:normal;color:#333;white-space:pre;">USD</div>
<div style="position:absolute;left:469.04px;top:518.63px;font-size:5.30px;line-height:1;font-weight:400;font-style:normal;color:#333;white-space:pre;">$299.97</div>
<div style="position:absolute;left:507.07px;top:518.35px;font-size:5.80px;line-height:1;font-weight:400;font-style:normal;color:#333;white-space:pre;">14</div>
<div style="position:absolute;left:532.00px;top:514.80px;width:69.50px;height:11.70px;background:#fff;border:1px solid #c9c9c9;border-radius:2px;box-sizing:border-box;"></div>
<div style="position:absolute;left:536.50px;top:519.04px;font-size:5.28px;line-height:1;font-weight:400;font-style:normal;color:#444;white-space:pre;transform:scaleX(0.7788);transform-origin:left 50%;">200-TX Plant</div>
<svg style="position:absolute;left:594.20px;top:519.98px" width="3.6" height="2.232" viewBox="0 0 3.6 2.232"><path d="M0 0 L3.6 0 L1.8 2.232Z" fill="#444"/></svg>
<div style="position:absolute;left:607.20px;top:514.60px;width:69.40px;height:11.70px;background:#fff;border:1px solid #a9a9a9;border-radius:2px;box-sizing:border-box;"></div>
<div style="position:absolute;left:612.00px;top:519.04px;font-size:5.28px;line-height:1;font-weight:400;font-style:normal;color:#444;white-space:pre;transform:scaleX(0.7970);transform-origin:left 50%;">No Value</div>
<svg style="position:absolute;left:669.40px;top:519.98px" width="3.6" height="2.232" viewBox="0 0 3.6 2.232"><path d="M0 0 L3.6 0 L1.8 2.232Z" fill="#444"/></svg>
<div style="position:absolute;left:607.60px;top:526.80px;width:69.00px;height:10.00px;background:#efefef;border:1px solid #dedede;border-radius:2px;box-sizing:border-box;"></div>
<svg style="position:absolute;left:669.80px;top:529.50px" width="4.4" height="4.4" viewBox="0 0 4.4 4.4"><rect x="0.2" y="0.6" width="4" height="3.6" rx="0.4" fill="#c8c8c8"/><rect x="0.8" y="1.6" width="2.8" height="2" fill="#e4e4e4"/></svg>
<div style="position:absolute;left:684.00px;top:514.60px;width:7.20px;height:7.40px;background:#ececec;border:1px solid #b9b9b9;border-radius:1.5px;box-sizing:border-box;"></div>
<svg style="position:absolute;left:684.80px;top:516.00px" width="5.6" height="4.6" viewBox="0 0 5.6 4.6"><ellipse cx="2.8" cy="2.3" rx="2.4" ry="1.5" fill="none" stroke="#555" stroke-width="0.7"/><circle cx="2.8" cy="2.3" r="0.8" fill="#555"/></svg>
<div style="position:absolute;left:694.00px;top:514.60px;width:6.60px;height:7.40px;background:#ececec;border:1px solid #b9b9b9;border-radius:1.5px;box-sizing:border-box;"></div>
<svg style="position:absolute;left:695.30px;top:515.80px" width="4" height="5" viewBox="0 0 4 5"><rect x="0.6" y="1.2" width="2.8" height="3.5" rx="0.3" fill="none" stroke="#555" stroke-width="0.7"/><line x1="0.2" y1="1" x2="3.8" y2="1" stroke="#555" stroke-width="0.6"/><rect x="1.4" y="0.2" width="1.2" height="0.7" fill="#555"/></svg>
<div style="position:absolute;left:42.00px;top:542.86px;font-size:5.60px;line-height:1;font-weight:400;font-style:normal;color:#444;white-space:pre;transform:scaleX(1.0146);transform-origin:left 50%;">Add item:</div>
<div style="position:absolute;left:78.90px;top:540.30px;width:70.30px;height:12.00px;background:#fff;border:1px solid #c9c9c9;border-radius:2px;box-sizing:border-box;"></div>
<div style="position:absolute;left:82.50px;top:545.05px;font-size:4.20px;line-height:1;font-weight:400;font-style:normal;color:#777;white-space:pre;">Search...</div>
<div style="position:absolute;left:154.90px;top:540.30px;width:31.90px;height:12.00px;background:#fff;border:1px solid #c9c9c9;border-radius:2px;box-sizing:border-box;"></div>
<div style="position:absolute;left:192.70px;top:540.70px;width:17.30px;height:8.10px;background:#858585;border-radius:4.1px;box-sizing:border-box;"></div>
<svg style="position:absolute;left:192.90px;top:540.90px" width="7.8" height="7.8" viewBox="0 0 7.8 7.8"><circle cx="3.9" cy="3.9" r="3.6" fill="#fff" stroke="#bbb" stroke-width="0.4"/></svg>
<div style="position:absolute;left:193.04px;top:550.81px;font-size:3.20px;line-height:1;font-weight:400;font-style:normal;color:#444;white-space:pre;transform:scaleX(0.9869);transform-origin:center 50%;">Rapid Entry</div>
<div style="position:absolute;left:532.30px;top:540.30px;width:60.00px;height:11.40px;background:#fff;border:1px solid #bfae9f;border-radius:2px;box-sizing:border-box;"></div>
<div style="position:absolute;left:537.48px;top:543.95px;font-size:5.80px;line-height:1;font-weight:400;font-style:normal;color:#7a5f4c;white-space:pre;transform:scaleX(0.9668);transform-origin:center 50%;">Check All Inventory</div>
<div style="position:absolute;left:359.00px;top:545.24px;font-size:6.00px;line-height:1;font-weight:700;font-style:italic;color:#222;white-space:pre;transform:scaleX(1.0325);transform-origin:left 50%;">Copper Weight:</div>
<div style="position:absolute;left:474.29px;top:546.06px;font-size:5.60px;line-height:1;font-weight:400;font-style:normal;color:#555;white-space:pre;">1,714</div>
<div style="position:absolute;left:359.00px;top:555.64px;font-size:6.00px;line-height:1;font-weight:700;font-style:italic;color:#222;white-space:pre;transform:scaleX(1.0817);transform-origin:left 50%;">Total Net Weight:</div>
<div style="position:absolute;left:474.29px;top:556.76px;font-size:5.60px;line-height:1;font-weight:400;font-style:normal;color:#555;white-space:pre;">1,818</div>
<div style="position:absolute;left:359.00px;top:566.64px;font-size:6.00px;line-height:1;font-weight:700;font-style:italic;color:#222;white-space:pre;transform:scaleX(1.0191);transform-origin:left 50%;">Sub-Total:</div>
<div style="position:absolute;left:454.88px;top:567.19px;font-size:6.09px;line-height:1;font-weight:400;font-style:normal;color:#555;white-space:pre;transform:scaleX(0.9936);transform-origin:right 50%;">$110,706.65</div>
<div style="position:absolute;left:359.00px;top:576.94px;font-size:6.00px;line-height:1;font-weight:700;font-style:italic;color:#222;white-space:pre;transform:scaleX(1.0134);transform-origin:left 50%;">Trailer Charges</div>
<div style="position:absolute;left:359.10px;top:585.90px;width:53.70px;height:11.70px;background:#fff;border:1px solid #c9c9c9;border-radius:2px;box-sizing:border-box;"></div>
<div style="position:absolute;left:363.50px;top:589.95px;font-size:5.80px;line-height:1;font-weight:700;font-style:normal;color:#222;white-space:pre;transform:scaleX(1.0921);transform-origin:left 50%;">FRT &amp; HNDL</div>
<svg style="position:absolute;left:406.10px;top:592.03px" width="2.8" height="1.736" viewBox="0 0 2.8 1.736"><path d="M0 0 L2.8 0 L1.4 1.736Z" fill="#555"/></svg>
<div style="position:absolute;left:418.70px;top:587.50px;width:70.20px;height:10.90px;background:#fff;border:1px solid #c9c9c9;border-radius:2px;box-sizing:border-box;"></div>
<div style="position:absolute;left:484.02px;top:590.99px;font-size:6.44px;line-height:1;font-weight:400;font-style:normal;color:#555;white-space:pre;transform:scaleX(0.8696);transform-origin:right 50%;">0</div>
<div style="position:absolute;left:359.10px;top:601.00px;width:53.70px;height:11.70px;background:#fff;border:1px solid #c9c9c9;border-radius:2px;box-sizing:border-box;"></div>
<div style="position:absolute;left:363.50px;top:605.05px;font-size:5.80px;line-height:1;font-weight:700;font-style:normal;color:#222;white-space:pre;transform:scaleX(1.0408);transform-origin:left 50%;">CUT CHG</div>
<svg style="position:absolute;left:406.10px;top:607.13px" width="2.8" height="1.736" viewBox="0 0 2.8 1.736"><path d="M0 0 L2.8 0 L1.4 1.736Z" fill="#555"/></svg>
<div style="position:absolute;left:418.70px;top:602.60px;width:70.20px;height:10.90px;background:#fff;border:1px solid #c9c9c9;border-radius:2px;box-sizing:border-box;"></div>
<div style="position:absolute;left:484.02px;top:606.09px;font-size:6.44px;line-height:1;font-weight:400;font-style:normal;color:#555;white-space:pre;transform:scaleX(0.8696);transform-origin:right 50%;">0</div>
<div style="position:absolute;left:359.10px;top:616.10px;width:53.70px;height:11.70px;background:#fff;border:1px solid #c9c9c9;border-radius:2px;box-sizing:border-box;"></div>
<div style="position:absolute;left:363.50px;top:620.15px;font-size:5.80px;line-height:1;font-weight:700;font-style:normal;color:#222;white-space:pre;transform:scaleX(1.0438);transform-origin:left 50%;">STRIPE CHG</div>
<svg style="position:absolute;left:406.10px;top:622.23px" width="2.8" height="1.736" viewBox="0 0 2.8 1.736"><path d="M0 0 L2.8 0 L1.4 1.736Z" fill="#555"/></svg>
<div style="position:absolute;left:418.70px;top:617.70px;width:70.20px;height:10.90px;background:#fff;border:1px solid #c9c9c9;border-radius:2px;box-sizing:border-box;"></div>
<div style="position:absolute;left:484.02px;top:621.19px;font-size:6.44px;line-height:1;font-weight:400;font-style:normal;color:#555;white-space:pre;transform:scaleX(0.8696);transform-origin:right 50%;">0</div>
<div style="position:absolute;left:359.00px;top:633.24px;font-size:6.00px;line-height:1;font-weight:700;font-style:normal;color:#222;white-space:pre;transform:scaleX(1.0606);transform-origin:left 50%;">Quote Total:</div>
<div style="position:absolute;left:454.88px;top:633.19px;font-size:6.09px;line-height:1;font-weight:400;font-style:normal;color:#555;white-space:pre;transform:scaleX(0.9936);transform-origin:right 50%;">$110,706.65</div>
</body></html>
